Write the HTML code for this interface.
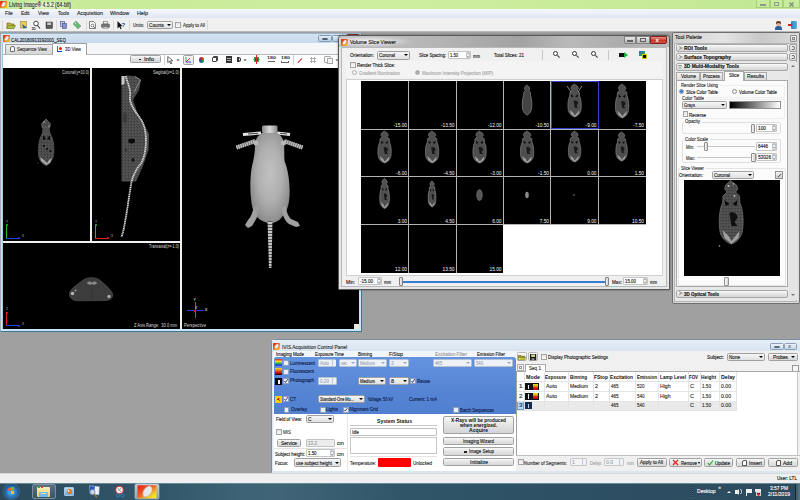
<!DOCTYPE html>
<html><head><meta charset="utf-8">
<style>
*{box-sizing:border-box;margin:0;padding:0}
html,body{width:800px;height:500px;overflow:hidden;background:#a0a0a0;font-family:"Liberation Sans",sans-serif;font-size:6px;color:#000;position:relative}
.a{position:absolute}
.t{position:absolute;white-space:nowrap;line-height:1;transform-origin:0 0}
svg{position:absolute}
</style></head><body>
<div class="a" style="left:0px;top:0px;width:800px;height:9px;background:linear-gradient(90deg,#c6ea98,#cdee9f 50%,#c2e894)"></div>
<div class="a" style="left:7px;top:1px;width:70px;height:8px;background:radial-gradient(ellipse at center,rgba(255,255,255,.9),rgba(255,255,255,0) 72%)"></div>
<svg style="left:0px;top:1px" width="7" height="7" viewBox="0 0 7 7"><defs><linearGradient id="lg01" x1="0" y1="0" x2="1" y2="1"><stop offset="0" stop-color="#e01818"/><stop offset="0.5" stop-color="#f07020"/><stop offset="1" stop-color="#f0e020"/></linearGradient></defs><rect width="7" height="7" rx="0.8" fill="url(#lg01)"/><ellipse cx="3.6" cy="3.4" rx="1.6" ry="2.6" transform="rotate(35 3.6 3.4)" fill="#f0f0f0" stroke="#a0a0a0" stroke-width="0.3"/></svg>
<div class="t" style="left:9px;top:2.38px;font-size:6.3px;color:#333;-webkit-text-stroke:0.15px currentColor;transform:scaleX(0.797);">Living Image® 4.5.2 (64-bit)</div>
<div class="a" style="left:756px;top:0px;width:14px;height:8px;border:1px solid #a8d080;border-top:0;background:#c8ec9c"></div>
<div class="a" style="left:770px;top:0px;width:13px;height:8px;border:1px solid #a8d080;border-top:0;background:#c8ec9c"></div>
<div class="a" style="left:783px;top:0px;width:17px;height:8px;border:1px solid #a8d080;border-top:0;background:#c8ec9c"></div>
<div class="a" style="left:760px;top:4px;width:6px;height:2px;background:#8a9a8a"></div>
<div class="a" style="left:774px;top:2px;width:5px;height:4px;border:1px solid #8a9a8a"></div>
<svg style="left:787px;top:1px" width="9" height="7" viewBox="0 0 9 7"><path d="M2.5 1.5 L6.5 5.5 M6.5 1.5 L2.5 5.5" stroke="#7a8a7a" stroke-width="1.3"/></svg>
<div class="a" style="left:0px;top:9px;width:800px;height:9px;background:linear-gradient(#f6f8fd,#dfe6f3)"></div>
<div class="t" style="left:4.5px;top:10.95px;font-size:5.8px;color:#2a2a2a;-webkit-text-stroke:0.15px currentColor;transform:scaleX(0.803);">File</div>
<div class="t" style="left:21px;top:10.95px;font-size:5.8px;color:#2a2a2a;-webkit-text-stroke:0.15px currentColor;transform:scaleX(0.850);">Edit</div>
<div class="t" style="left:38px;top:10.95px;font-size:5.8px;color:#2a2a2a;-webkit-text-stroke:0.15px currentColor;transform:scaleX(0.882);">View</div>
<div class="t" style="left:58px;top:10.95px;font-size:5.8px;color:#2a2a2a;-webkit-text-stroke:0.15px currentColor;transform:scaleX(0.812);">Tools</div>
<div class="t" style="left:77px;top:10.95px;font-size:5.8px;color:#2a2a2a;-webkit-text-stroke:0.15px currentColor;transform:scaleX(0.927);">Acquisition</div>
<div class="t" style="left:110px;top:10.95px;font-size:5.8px;color:#2a2a2a;-webkit-text-stroke:0.15px currentColor;transform:scaleX(0.921);">Window</div>
<div class="t" style="left:137px;top:10.95px;font-size:5.8px;color:#2a2a2a;-webkit-text-stroke:0.15px currentColor;transform:scaleX(0.922);">Help</div>
<div class="a" style="left:0px;top:18px;width:800px;height:14px;background:#f0f0f0;border-bottom:1px solid #b8b8b8"></div>
<div class="a" style="left:2px;top:20px;width:1px;height:10px;background:#d8d8d8"></div>
<svg style="left:0;top:18px" width="130" height="14" viewBox="0 18 130 14">
<path d="M7 23 L10 23 L11 24 L14 24 L14 28 L7 28 Z" fill="#c8b040" stroke="#6a5a10" stroke-width="0.6"/>
<path d="M8 25.5 L15.5 25.5 L14 28.5 L6.5 28.5 Z" fill="#a8c040" stroke="#5a6a10" stroke-width="0.5"/>
<rect x="20.5" y="21.5" width="6" height="6.5" fill="#e8d060" stroke="#8a7020" stroke-width="0.5"/>
<path d="M22 24 L27 27.5 L23.5 28.5 Z" fill="#2a5ab0"/>
<circle cx="36" cy="23.5" r="2.3" fill="#fff" stroke="#333" stroke-width="0.9"/>
<path d="M37.5 25.5 L40 28.5" stroke="#333" stroke-width="1.1"/>
<text x="31.5" y="29.5" font-size="3.2" font-weight="bold" fill="#222" font-family="Liberation Sans">3D</text>
<rect x="46" y="22" width="6.5" height="6.5" fill="#5a5a5a" stroke="#333" stroke-width="0.5"/>
<rect x="47.3" y="22.5" width="3.8" height="2.5" fill="#c8c8c8"/>
<rect x="60.5" y="21.5" width="4" height="5" fill="#c8c8e8" stroke="#404890" stroke-width="0.6"/>
<rect x="62.5" y="23.5" width="4" height="5" fill="#8890d0" stroke="#404890" stroke-width="0.6"/>
<path d="M73 24 L76 21 L81 26 L78 29 Z" fill="#60c070" stroke="#909090" stroke-width="0.6"/>
<circle cx="75.5" cy="23.5" r="0.6" fill="#fff"/>
<path d="M89.5 21.5 L93.5 21.5 L95.5 23.5 L95.5 28.5 L89.5 28.5 Z" fill="#fff" stroke="#333" stroke-width="0.6"/>
<circle cx="92.5" cy="25.5" r="1.4" fill="none" stroke="#333" stroke-width="0.6"/>
<path d="M93.5 26.5 L95 28" stroke="#333" stroke-width="0.7"/>
<rect x="103.5" y="21.5" width="4" height="2.5" fill="#f0f0f0" stroke="#555" stroke-width="0.5"/>
<rect x="101.5" y="24" width="8" height="3.5" rx="0.8" fill="#7a7a7a" stroke="#444" stroke-width="0.5"/>
<rect x="103" y="27" width="5" height="1.5" fill="#e8e8e8" stroke="#555" stroke-width="0.4"/>
<path d="M117.5 21 L117.5 28.5 L119.3 26.8 L120.6 29.3 L121.6 28.8 L120.4 26.3 L122.6 26.2 Z" fill="#111"/>
<text x="121.5" y="26.5" font-size="6" font-weight="bold" fill="#2040a0" font-family="Liberation Sans">?</text>
</svg>
<div class="a" style="left:2px;top:20px;width:1px;height:10px;background:#d8d8d8"></div>
<div class="a" style="left:56px;top:20px;width:1px;height:10px;background:#d8d8d8"></div>
<div class="a" style="left:86px;top:20px;width:1px;height:10px;background:#d8d8d8"></div>
<div class="a" style="left:113px;top:20px;width:1px;height:10px;background:#d8d8d8"></div>
<div class="a" style="left:129px;top:20px;width:1px;height:10px;background:#d8d8d8"></div>
<div class="t" style="left:133px;top:22.97px;font-size:5.6px;color:#333;-webkit-text-stroke:0.15px currentColor;transform:scaleX(0.768);">Units:</div>
<div class="a" style="left:147px;top:21px;width:26px;height:8px;background:linear-gradient(#f6f6f6,#e0e0e0);border:1px solid #a0a0a0;border-radius:1.5px"></div>
<div class="t" style="left:149px;top:22.97px;font-size:5.6px;color:#222;-webkit-text-stroke:0.15px currentColor;transform:scaleX(0.845);">Counts</div>
<div class="a" style="left:167px;top:24.0px;width:0px;height:0px;border-left:2px solid transparent;border-right:2px solid transparent;border-top:2px solid #000"></div>
<div class="a" style="left:175px;top:22px;width:6px;height:6px;background:linear-gradient(#e4e4e4,#fafafa);border:1px solid #a4a4a4"></div>
<div class="t" style="left:182.5px;top:22.97px;font-size:5.6px;color:#333;-webkit-text-stroke:0.15px currentColor;transform:scaleX(0.794);">Apply to All</div>
<div class="a" style="left:207px;top:20px;width:1px;height:10px;background:#d8d8d8"></div>
<div class="a" style="left:776px;top:21px;width:5px;height:3px;background:#553322;border-radius:50% 50% 0 0"></div>
<div class="a" style="left:776px;top:23px;width:5px;height:3px;background:#e0b090;border-radius:50%"></div>
<div class="a" style="left:775px;top:26px;width:7px;height:4px;background:#2a5aa0;border-radius:3px 3px 0 0"></div>
<div class="a" style="left:791px;top:21px;width:6px;height:8px;background:linear-gradient(90deg,#3080c0,#60b0e0);border-radius:1px"></div>
<div class="a" style="left:788px;top:24px;width:4px;height:2px;background:#e02020"></div>
<div class="a" style="left:0px;top:473px;width:800px;height:10px;background:#efefef;border-top:1px solid #d8d8d8"></div>
<div class="t" style="left:777px;top:475.97px;font-size:5.6px;color:#222;-webkit-text-stroke:0.15px currentColor;transform:scaleX(0.828);">User: LTL</div>
<div class="a" style="left:0px;top:483px;width:800px;height:17px;background:linear-gradient(90deg,#2a4a5c,#365c70 30%,#2e5266 60%,#2c4a5e)"></div>
<div class="a" style="left:0px;top:483px;width:800px;height:1px;background:#6a8a9a"></div>
<div class="a" style="left:0px;top:33px;width:362px;height:299px;background:#c8e4f8;border:1px solid #3c7a92;border-left-color:#a4acb4;border-top-color:#9ab4ca;border-radius:2px 2px 0 0"></div>
<div class="a" style="left:1px;top:34px;width:360px;height:9px;background:linear-gradient(#d6e4f2,#c6d8ec)"></div>
<svg style="left:3px;top:35px" width="7" height="7" viewBox="0 0 7 7"><defs><linearGradient id="lg335" x1="0" y1="0" x2="1" y2="1"><stop offset="0" stop-color="#e01818"/><stop offset="0.5" stop-color="#f07020"/><stop offset="1" stop-color="#f0e020"/></linearGradient></defs><rect width="7" height="7" rx="0.8" fill="url(#lg335)"/><ellipse cx="3.6" cy="3.4" rx="1.6" ry="2.6" transform="rotate(35 3.6 3.4)" fill="#f0f0f0" stroke="#a0a0a0" stroke-width="0.3"/></svg>
<div class="t" style="left:11px;top:37.55px;font-size:5.8px;color:#222;-webkit-text-stroke:0.15px currentColor;transform:scaleX(0.765);">CAL20180913192001_SEQ</div>
<div class="a" style="left:318px;top:35px;width:14px;height:7px;background:linear-gradient(#e4eef8,#b8cce0);border:1px solid #7e9ab6;border-radius:1.5px"></div>
<div class="a" style="left:322px;top:38px;width:6px;height:2px;border:1px solid #506070;border-radius:1px"></div>
<div class="a" style="left:332px;top:35px;width:14px;height:7px;background:linear-gradient(#e4eef8,#b8cce0);border:1px solid #7e9ab6;border-radius:1.5px"></div>
<div class="a" style="left:346px;top:34px;width:14px;height:8px;background:linear-gradient(#d88070,#b84030);border:1px solid #803028;border-radius:1.5px"></div>
<div class="a" style="left:2px;top:43px;width:357px;height:286px;background:#fff;border:1px solid #a8c8dc"></div>
<div class="a" style="left:3px;top:43px;width:355px;height:11px;background:#f4f6f8"></div>
<div class="a" style="left:3px;top:54px;width:355px;height:1px;background:#b8b8b8"></div>
<div class="a" style="left:5px;top:44px;width:48px;height:10px;background:linear-gradient(#eeeeee,#d6d6d6);border:1px solid #a0a0a0;border-bottom:0;border-radius:1px 1px 0 0"></div>
<div class="a" style="left:10px;top:46px;width:5px;height:6px;background:#fafafa;border:1px solid #707070;border-radius:2px 2px 0 0"></div>
<div class="t" style="left:17px;top:47.15px;font-size:5.8px;color:#333;-webkit-text-stroke:0.15px currentColor;transform:scaleX(0.746);">Sequence View</div>
<div class="a" style="left:52px;top:43px;width:35px;height:12px;background:#fff;border:1px solid #a0a0a0;border-bottom:0;border-radius:1px 1px 0 0"></div>
<div class="a" style="left:57px;top:46px;width:1px;height:5px;background:#20a020"></div>
<div class="a" style="left:57px;top:51px;width:5px;height:1px;background:#2040d0"></div>
<div class="a" style="left:59px;top:47px;width:3px;height:3px;background:#e02020;border-radius:50%"></div>
<div class="t" style="left:65px;top:47.15px;font-size:5.8px;color:#333;-webkit-text-stroke:0.15px currentColor;transform:scaleX(0.744);">3D View</div>
<div class="a" style="left:130px;top:55px;width:31px;height:8px;background:linear-gradient(#f8f8f8,#e4e4e4 50%,#d8d8d8);border:1px solid #a2a2a2;border-radius:1.5px"></div>
<div class="a" style="left:139px;top:58.5px;width:1.8px;height:1.8px;background:#222"></div>
<div class="t" style="left:144px;top:56.97px;font-size:5.6px;color:#222;-webkit-text-stroke:0.15px currentColor;transform:scaleX(1.071);">Info</div>
<div class="a" style="left:163.5px;top:55px;width:1px;height:10px;background:#d0d0d0"></div>
<svg style="left:166.5px;top:55.5px" width="6.6499999999999995" height="8.549999999999999" viewBox="0 0 7 9"><path d="M0.8 0.5 L0.8 7 L2.6 5.5 L3.9 8.3 L5 7.8 L3.8 5.1 L6 5 Z" fill="#fff" stroke="#333" stroke-width="0.8"/></svg>
<svg style="left:175.5px;top:58.5px" width="4.0" height="2.5" viewBox="0 0 4.0 2.5"><path d="M0.5 0.5 L3.5 0.5 L2.0 2.0 Z" fill="#222"/></svg>
<div class="a" style="left:183px;top:54.5px;width:11px;height:10px;background:linear-gradient(#f8f8f8,#e4e4e4);border:1px solid #a0a0a0;border-radius:1.5px"></div>
<svg style="left:184px;top:56px" width="9" height="8" viewBox="184 56 9 8"><path d="M186 57 L186 62" stroke="#20b020" stroke-width="0.9"/><path d="M186 62 L191 62" stroke="#2040e0" stroke-width="0.9"/><path d="M186 62 L190 58" stroke="#e02020" stroke-width="0.9"/></svg>
<div class="a" style="left:199px;top:57px;width:5px;height:6px;background:conic-gradient(#e02020,#20a020,#2040d0,#e02020);border-radius:50%"></div>
<div class="a" style="left:212px;top:57px;width:5px;height:5px;background:#fff;border:1px solid #444;border-radius:1px;box-shadow:1px -1px 0 #444"></div>
<div class="a" style="left:226px;top:56px;width:6px;height:7px;background:repeating-linear-gradient(#333 0 1px,#aaa 1px 2px);border:1px solid #333"></div>
<div class="a" style="left:237px;top:57px;width:4px;height:5px;border:1px solid #333;border-left:2px solid #333;border-radius:0 3px 3px 0"></div>
<svg style="left:242.5px;top:58.5px" width="4.0" height="2.5" viewBox="0 0 4.0 2.5"><path d="M0.5 0.5 L3.5 0.5 L2.0 2.0 Z" fill="#222"/></svg>
<div class="a" style="left:253px;top:56px;width:7px;height:7px;background:radial-gradient(circle,#206020 30%,#20a040 31%,#30b040 60%,transparent 62%)"></div>
<div class="a" style="left:256px;top:55px;width:1px;height:9px;background:#e02020"></div>
<div class="t" style="left:267px;top:56.18px;font-size:4px;color:#333;font-weight:bold;transform:scaleX(1.349);">180</div>
<div class="a" style="left:268px;top:61px;width:7px;height:1px;background:#666"></div>
<div class="t" style="left:281px;top:56.18px;font-size:4px;color:#333;font-weight:bold;transform:scaleX(1.349);">180</div>
<div class="a" style="left:281px;top:61px;width:8px;height:2px;border:1px solid #666;border-top:0"></div>
<div class="a" style="left:293px;top:55px;width:1px;height:10px;background:#d0d0d0"></div>
<div class="a" style="left:297px;top:60px;width:6px;height:1px;background:#d03030;transform:rotate(-45deg)"></div>
<div class="a" style="left:310px;top:57px;width:6px;height:6px;background:radial-gradient(circle,#888 1px,transparent 1.2px) 0 0/3px 3px;opacity:.7"></div>
<div class="a" style="left:324px;top:56px;width:7px;height:7px;border:1px solid #aaa;background:#f8f8f8;border-radius:1px"></div>
<div class="a" style="left:327px;top:58px;width:6px;height:6px;border:1px solid #aaa;background:#f4f4f4"></div>
<svg style="left:334.5px;top:58.5px" width="4.0" height="2.5" viewBox="0 0 4.0 2.5"><path d="M0.5 0.5 L3.5 0.5 L2.0 2.0 Z" fill="#444"/></svg>
<div class="a" style="left:3px;top:68px;width:356px;height:261px;background:#000"></div>
<div class="a" style="left:90px;top:68px;width:2px;height:173px;background:#f0f0f0"></div>
<div class="a" style="left:180px;top:68px;width:2px;height:261px;background:#f0f0f0"></div>
<div class="a" style="left:3px;top:241px;width:177px;height:2px;background:#f0f0f0"></div>
<div class="t" style="left:62px;top:70.62px;font-size:4.5px;color:#ddd;-webkit-text-stroke:0.15px currentColor;transform:scaleX(0.834);-webkit-text-stroke:0">Coronal(y=10.0)</div>
<div class="t" style="left:153px;top:70.62px;font-size:4.5px;color:#ddd;-webkit-text-stroke:0.15px currentColor;transform:scaleX(0.892);-webkit-text-stroke:0">Sagittal(x=1.0)</div>
<div class="t" style="left:149px;top:245.11px;font-size:4.5px;color:#ddd;-webkit-text-stroke:0.15px currentColor;transform:scaleX(0.828);-webkit-text-stroke:0">Transaxial(z=-1.0)</div>
<div class="t" style="left:134px;top:324.12px;font-size:4.5px;color:#ddd;-webkit-text-stroke:0.15px currentColor;transform:scaleX(0.896);-webkit-text-stroke:0">Z Axis Range:&nbsp; 30.0 mm</div>
<div class="t" style="left:184px;top:324.12px;font-size:4.5px;color:#ddd;-webkit-text-stroke:0.15px currentColor;transform:scaleX(0.936);-webkit-text-stroke:0">Perspective</div>
<div class="a" style="left:354px;top:324px;width:5px;height:5px;background:#ece8d4"></div>
<div class="a" style="left:6px;top:224.5px;width:1px;height:13px;background:#20c020"></div>
<div class="a" style="left:5.5px;top:224.0px;width:2px;height:2px;background:#20c020;border-radius:50%"></div>
<div class="a" style="left:6px;top:237.5px;width:13px;height:1px;background:#2040e0"></div>
<div class="a" style="left:18px;top:237.0px;width:2px;height:2px;background:#2040e0;border-radius:50%"></div>
<div class="t" style="left:6px;top:220.78px;font-size:3.2px;color:#bbb;-webkit-text-stroke:0.15px currentColor;-webkit-text-stroke:0">Y</div>
<div class="t" style="left:22px;top:235.28px;font-size:3.2px;color:#bbb;-webkit-text-stroke:0.15px currentColor;-webkit-text-stroke:0">X</div>
<div class="a" style="left:95px;top:224.5px;width:1px;height:13px;background:#20c020"></div>
<div class="a" style="left:94.5px;top:224.0px;width:2px;height:2px;background:#20c020;border-radius:50%"></div>
<div class="a" style="left:95px;top:237.5px;width:13px;height:1px;background:#e02020"></div>
<div class="a" style="left:107px;top:237.0px;width:2px;height:2px;background:#e02020;border-radius:50%"></div>
<div class="t" style="left:95px;top:220.78px;font-size:3.2px;color:#bbb;-webkit-text-stroke:0.15px currentColor;-webkit-text-stroke:0">Y</div>
<div class="t" style="left:111px;top:235.28px;font-size:3.2px;color:#bbb;-webkit-text-stroke:0.15px currentColor;-webkit-text-stroke:0">X</div>
<div class="a" style="left:6px;top:312px;width:1px;height:13px;background:#e02020"></div>
<div class="a" style="left:5.5px;top:311.5px;width:2px;height:2px;background:#e02020;border-radius:50%"></div>
<div class="a" style="left:6px;top:325px;width:13px;height:1px;background:#2040e0"></div>
<div class="a" style="left:18px;top:324.5px;width:2px;height:2px;background:#2040e0;border-radius:50%"></div>
<div class="t" style="left:6px;top:308.28px;font-size:3.2px;color:#bbb;-webkit-text-stroke:0.15px currentColor;-webkit-text-stroke:0">Z</div>
<div class="t" style="left:22px;top:322.78px;font-size:3.2px;color:#bbb;-webkit-text-stroke:0.15px currentColor;-webkit-text-stroke:0">X</div>
<div class="a" style="left:194.5px;top:302px;width:1px;height:16px;background:#20a020"></div>
<div class="a" style="left:187px;top:310px;width:17px;height:1px;background:#2040e0"></div>
<div class="a" style="left:194px;top:309.5px;width:2px;height:2px;background:#e02020"></div>
<div class="t" style="left:193.5px;top:298.75px;font-size:3.5px;color:#ccc;-webkit-text-stroke:0.15px currentColor;">Y</div>
<div class="t" style="left:205px;top:308.75px;font-size:3.5px;color:#ccc;-webkit-text-stroke:0.15px currentColor;">X</div>
<div class="t" style="left:195.5px;top:307.31px;font-size:3px;color:#ccc;-webkit-text-stroke:0.15px currentColor;">Z</div>
<svg style="left:183px;top:67px" width="176" height="262" viewBox="183 67 176 262">
<defs>
<radialGradient id="bodyg" cx="0.5" cy="0.45" r="0.62"><stop offset="0" stop-color="#c8c8c8"/><stop offset="0.5" stop-color="#b4b4b4"/><stop offset="0.85" stop-color="#949494"/><stop offset="1" stop-color="#767676"/></radialGradient>
<linearGradient id="neckg" x1="0" x2="1"><stop offset="0" stop-color="#8a8a8a"/><stop offset="0.5" stop-color="#d8d8d8"/><stop offset="1" stop-color="#8a8a8a"/></linearGradient>
<pattern id="tailp" width="4" height="3" patternUnits="userSpaceOnUse"><rect width="4" height="3" fill="#c4c4c4"/><rect y="2" width="4" height="1" fill="#5a5a5a"/></pattern>
<pattern id="skin" width="4" height="4" patternUnits="userSpaceOnUse"><rect width="4" height="4" fill="none"/><path d="M0 1 Q2 0 4 1.5 M0 3 Q2 2.2 4 3.4" stroke="#6a6a6a" stroke-width="0.4" fill="none"/></pattern>
</defs>
<path d="M236.5 147.5 L255.5 141" stroke="#7a7a7a" stroke-width="4"/><path d="M236.5 147.5 L255.5 141" stroke="#cacaca" stroke-width="4" stroke-dasharray="1 1.2"/>
<path d="M302.5 147.5 L284 141" stroke="#7a7a7a" stroke-width="4"/><path d="M302.5 147.5 L284 141" stroke="#cacaca" stroke-width="4" stroke-dasharray="1 1.2"/>
<path d="M243 134.5 L261 133" stroke="#e4e4e4" stroke-width="3"/>
<path d="M248 134 L258 133.3" stroke="#444" stroke-width="1"/>
<path d="M277 133 L290 134.5" stroke="#e4e4e4" stroke-width="3"/>
<path d="M280 133.3 L287 134" stroke="#444" stroke-width="1"/>
<rect x="262" y="125.5" width="15.5" height="7.5" rx="1.5" fill="url(#neckg)"/>
<path d="M262 133 C257 136 255 140 255 146 C255 152 254 157 253 162 C250 172 250 190 251 198 C251.5 206 253 212 257 217 C261 221 266 223 270 223 C275 223 279 221 282 217 C287 212 289 205 289.5 196 C290 186 289 172 284.5 161 C284 155 284.5 148 284 144 C283.5 139 281 135 277 133 Z" fill="url(#bodyg)"/>
<path d="M262 133 C257 136 255 140 255 146 C255 152 254 157 253 162 C250 172 250 190 251 198 C251.5 206 253 212 257 217 C261 221 266 223 270 223 C275 223 279 221 282 217 C287 212 289 205 289.5 196 C290 186 289 172 284.5 161 C284 155 284.5 148 284 144 C283.5 139 281 135 277 133 Z" fill="url(#skin)" opacity="0.35"/>
<circle cx="256" cy="143" r="2.5" fill="#b8b8b8"/><circle cx="283.5" cy="143" r="2.5" fill="#b8b8b8"/>
<path d="M254 205 C253 212 251 217 248 220 L245 225 L248 228 L252 226 L255 221 C258 216 259 211 258 207 Z" fill="#a0a0a0"/>
<path d="M286 205 C286 211 288 216 291 219 L298 222 L300 226 L296 227 L289 224 C284 220 282 214 282 208 Z" fill="#a0a0a0"/>
<path d="M267.5 221 L272.5 221 L271.5 268 L269 268 Z" fill="url(#tailp)"/>
<path d="M253 185 C252 200 255 212 262 219" stroke="#888" stroke-width="1" fill="none" opacity="0.6"/>
</svg>
<svg style="left:3px;top:67px" width="87" height="174" viewBox="3 67 87 174">
<defs><pattern id="spk2" width="3" height="3" patternUnits="userSpaceOnUse"><rect width="3" height="3" fill="#484848"/><rect x="0" y="0" width="1" height="1" fill="#5a5a5a"/><rect x="2" y="1" width="1" height="1" fill="#3a3a3a"/><rect x="1" y="2" width="1" height="1" fill="#525252"/></pattern></defs>
<path d="M46 119 L50.5 124 L49.5 128 L42.5 128 L41.5 124 Z" fill="url(#spk2)" stroke="#8a8a8a" stroke-width="0.6"/>
<path d="M42.5 128 L49.5 128 L50.5 134 L42 134 Z" fill="#4e4e4e"/>
<path d="M42 134 L50.5 134 C54 140 54.5 150 53.5 156 C52 161 49 165 46 165.5 C42 164 39 160 38.5 155 C38 147 39 139 42 134 Z" fill="url(#spk2)" stroke="#6a6a6a" stroke-width="0.5"/>
<path d="M43 135 L46 139 L43 140 Z M50 135 L47 139 L50 140 Z" fill="#080808"/>
<circle cx="44" cy="146" r="1" fill="#0a0a0a"/><circle cx="47" cy="149" r="1" fill="#0a0a0a"/><circle cx="50.5" cy="151" r="1.1" fill="#0a0a0a"/>
<path d="M40 157 L44 160 L47 163 L49 160 L52 158 L50 163 L46 165 L41 161 Z" fill="#a8a8a8"/>
<circle cx="44" cy="122" r="0.8" fill="#bbb"/><circle cx="49" cy="126" r="0.7" fill="#aaa"/>
<circle cx="38" cy="163" r="0.5" fill="#888"/>
</svg>
<svg style="left:92px;top:67px" width="88" height="174" viewBox="92 67 88 174">
<defs><pattern id="spk" width="3" height="3" patternUnits="userSpaceOnUse"><rect width="3" height="3" fill="#4a4a4a"/><rect x="0" y="0" width="1" height="1" fill="#5c5c5c"/><rect x="2" y="1" width="1" height="1" fill="#3c3c3c"/><rect x="1" y="2" width="1" height="1" fill="#545454"/></pattern></defs>
<path d="M121.5 77 L127 75.5 L135 76 L141 80 L139 90 L133 100 L137 112 L144 124 L149 134 L148.5 150 L143 166 L136 181.5 L121.5 181.5 Z" fill="url(#spk)"/>
<path d="M121.5 76 L124.5 76 L124.5 84 L121.5 85 Z" fill="#c8c8c8"/>
<path d="M135 76.5 L140.5 80 L134 92" fill="none" stroke="#8a8a8a" stroke-width="1"/>
<ellipse cx="131.6" cy="141" rx="3.4" ry="2.4" fill="#0a0a0a"/>
<ellipse cx="133" cy="160" rx="1.5" ry="2" fill="#151515"/>
<ellipse cx="125" cy="118" rx="2" ry="5" fill="#3a3a3a"/>
<ellipse cx="126" cy="150" rx="1" ry="1" fill="#202020"/>
<path d="M125.6 76 C128 84 131 90 130 96 C129 103 134 110 140 118 C145 125 147 135 145.5 149 C144 158 142 163 138.8 166 C135 172 133 176 131.5 182 C129 196 127 212 125 222 C124 228 123 233 121.5 237" fill="none" stroke="#d8d8d8" stroke-width="1.8" stroke-dasharray="1.3 0.5"/>
</svg>
<svg style="left:3px;top:243px" width="177" height="86" viewBox="3 243 177 86">
<path d="M84 279.5 C88 277 95 277 99 279.5 C104 283 109 288 112 292.5 C114 296 112 299.5 107 300.5 L77 300.8 C72 300.5 69 297 69.5 293 C71 288 78 284 84 279.5 Z" fill="#3c3c3c" stroke="#585858" stroke-width="0.6"/>
<path d="M87 283 C88 281 91 281 92 283 C93 281 96 281 97 283 C96 285 93 285 92 284 C91 285 88 285 87 283 Z" fill="#8a8a8a"/>
<circle cx="72.5" cy="293.5" r="1.8" fill="#b0b0b0"/><circle cx="75.5" cy="290.5" r="1.1" fill="#909090"/><circle cx="109" cy="296.5" r="1.7" fill="#a8a8a8"/>
<path d="M92 286 L92 299" stroke="#333" stroke-width="0.8"/>
</svg>
<div class="a" style="left:338px;top:35px;width:332px;height:255px;background:#e4e6e8;border:1px solid #5a5a5a;border-radius:4px 4px 1px 1px;box-shadow:0 0 2px rgba(0,0,0,.5)"></div>
<div class="a" style="left:339px;top:36px;width:330px;height:11px;background:linear-gradient(90deg,#c4c4c4 0%,#b4b4b4 30%,#a2a2a2 55%,#bababa 70%,#acacac 85%,#bcbcbc 100%);border-radius:3px 3px 0 0"></div>
<div class="a" style="left:339px;top:36px;width:75px;height:11px;background:radial-gradient(ellipse at 40% 50%,rgba(255,255,255,.85),rgba(255,255,255,0) 70%)"></div>
<svg style="left:341px;top:39px" width="7" height="7" viewBox="0 0 7 7"><defs><linearGradient id="lg34139" x1="0" y1="0" x2="1" y2="1"><stop offset="0" stop-color="#e01818"/><stop offset="0.5" stop-color="#f07020"/><stop offset="1" stop-color="#f0e020"/></linearGradient></defs><rect width="7" height="7" rx="0.8" fill="url(#lg34139)"/><ellipse cx="3.6" cy="3.4" rx="1.6" ry="2.6" transform="rotate(35 3.6 3.4)" fill="#f0f0f0" stroke="#a0a0a0" stroke-width="0.3"/></svg>
<div class="t" style="left:350px;top:39.57px;font-size:5.6px;color:#1a1a1a;-webkit-text-stroke:0.15px currentColor;transform:scaleX(0.903);">Volume Slice Viewer</div>
<div class="a" style="left:624px;top:36px;width:12px;height:8px;background:linear-gradient(#e8e8e8,#b8b8b8);border:1px solid #808080;border-radius:0 0 0 2px"></div>
<div class="a" style="left:627px;top:40px;width:6px;height:1.5px;background:#606060"></div>
<div class="a" style="left:636px;top:36px;width:14px;height:8px;background:linear-gradient(#e8e8e8,#b8b8b8);border:1px solid #808080"></div>
<div class="a" style="left:640px;top:38px;width:6px;height:4px;border:1px solid #606060"></div>
<div class="a" style="left:650px;top:36px;width:17px;height:8px;background:linear-gradient(#e89080,#c83828 60%,#d85040);border:1px solid #802020;border-radius:0 0 2px 0"></div>
<div class="t" style="left:655.5px;top:37.42px;font-size:6px;color:#fff;font-weight:bold;">x</div>
<div class="a" style="left:341px;top:47px;width:326px;height:240px;background:#f0f0f0;border:1px solid #b8b8b8"></div>
<div class="t" style="left:350px;top:53.07px;font-size:5.6px;color:#222;-webkit-text-stroke:0.15px currentColor;transform:scaleX(0.829);">Orientation:</div>
<div class="a" style="left:377px;top:50.5px;width:33px;height:9px;background:linear-gradient(#f6f6f6,#e0e0e0);border:1px solid #a0a0a0;border-radius:1.5px"></div>
<div class="t" style="left:379px;top:52.97px;font-size:5.6px;color:#222;-webkit-text-stroke:0.15px currentColor;transform:scaleX(0.816);">Coronal</div>
<div class="a" style="left:404px;top:54.0px;width:0px;height:0px;border-left:2px solid transparent;border-right:2px solid transparent;border-top:2px solid #000"></div>
<div class="t" style="left:419px;top:53.07px;font-size:5.6px;color:#222;-webkit-text-stroke:0.15px currentColor;transform:scaleX(0.761);">Slice Spacing:</div>
<div class="a" style="left:448px;top:51px;width:23px;height:8px;background:#fff;border:1px solid #c4c4c4;border-radius:1px"></div>
<div class="t" style="left:450px;top:52.97px;font-size:5.6px;color:#222;-webkit-text-stroke:0.15px currentColor;transform:scaleX(0.734);">1.50</div>
<div class="a" style="left:466px;top:52px;width:4px;height:6px;background:linear-gradient(#f8f8f8,#e4e4e4);border:0.5px solid #c4c4c4;border-radius:1px"></div>
<div class="a" style="left:467px;top:53.0px;width:0px;height:0px;border-left:1px solid transparent;border-right:1px solid transparent;border-bottom:1.2px solid #6080a0"></div>
<div class="a" style="left:467px;top:55.8px;width:0px;height:0px;border-left:1px solid transparent;border-right:1px solid transparent;border-top:1.2px solid #6080a0"></div>
<div class="t" style="left:473px;top:53.57px;font-size:5.6px;color:#222;-webkit-text-stroke:0.15px currentColor;transform:scaleX(0.750);">mm</div>
<div class="t" style="left:494px;top:53.17px;font-size:5.6px;color:#222;-webkit-text-stroke:0.15px currentColor;transform:scaleX(0.797);">Total Slices: 21</div>
<div class="a" style="left:542px;top:50px;width:1px;height:10px;background:#c8c8c8"></div>
<div class="a" style="left:553px;top:51px;width:5px;height:5px;border:1px solid #333;border-radius:50%;background:#fff"></div>
<div class="a" style="left:557px;top:56px;width:3px;height:1px;background:#333;transform:rotate(45deg)"></div>
<div class="a" style="left:572px;top:51px;width:5px;height:5px;border:1px solid #333;border-radius:50%;background:#fff"></div>
<div class="a" style="left:576px;top:56px;width:3px;height:1px;background:#333;transform:rotate(45deg)"></div>
<div class="a" style="left:591px;top:51px;width:5px;height:5px;border:1px solid #333;border-radius:50%;background:#fff"></div>
<div class="a" style="left:595px;top:56px;width:3px;height:1px;background:#333;transform:rotate(45deg)"></div>
<div class="a" style="left:608px;top:50px;width:1px;height:10px;background:#c8c8c8"></div>
<div class="a" style="left:619px;top:53px;width:5px;height:4px;background:#111"></div>
<div class="a" style="left:624px;top:52px;width:0px;height:0px;border-top:3px solid transparent;border-bottom:3px solid transparent;border-left:4px solid #20b040"></div>
<div class="a" style="left:639px;top:51px;width:6px;height:5px;background:linear-gradient(135deg,#3060c0,#40c040)"></div>
<div class="a" style="left:642px;top:54px;width:5px;height:5px;background:#111;border:1px solid #d0c020"></div>
<div class="a" style="left:346px;top:61px;width:316px;height:17px;background:#f4f4f4;border-radius:2px"></div>
<div class="a" style="left:350px;top:62px;width:5.5px;height:5.5px;background:linear-gradient(#e4e4e4,#fafafa);border:1px solid #a4a4a4"></div>
<div class="t" style="left:356.5px;top:63.17px;font-size:5.6px;color:#222;-webkit-text-stroke:0.15px currentColor;transform:scaleX(0.784);">Render Thick Slice:</div>
<div class="a" style="left:352px;top:70px;width:5px;height:5px;background:#f4f4f4;border:1px solid #b0b0b0;border-radius:50%"></div>
<div class="t" style="left:359px;top:70.97px;font-size:5.6px;color:#a8a8a8;-webkit-text-stroke:0.15px currentColor;transform:scaleX(0.798);">Gradient Illumination</div>
<div class="a" style="left:415px;top:70px;width:5px;height:5px;background:#f4f4f4;border:1px solid #b0b0b0;border-radius:50%"></div>
<div class="a" style="left:416.2px;top:71.2px;width:2.6px;height:2.6px;background:#2a7ad0;border-radius:50%"></div>
<div class="a" style="left:416.2px;top:71.2px;width:2.6px;height:2.6px;background:#b0b0b0;border-radius:50%"></div>
<div class="t" style="left:422px;top:70.97px;font-size:5.6px;color:#a8a8a8;-webkit-text-stroke:0.15px currentColor;transform:scaleX(0.803);">Maximum Intensity Projection (MIP)</div>
<div class="a" style="left:346px;top:78.5px;width:317px;height:197px;background:#fff;border:1px solid #d0d0d0"></div>
<div class="a" style="left:361px;top:81px;width:285px;height:192px;background:#000"></div>
<div class="a" style="left:408.0px;top:81px;width:1px;height:192px;background:#b4b4b4"></div>
<div class="a" style="left:455.5px;top:81px;width:1px;height:192px;background:#b4b4b4"></div>
<div class="a" style="left:502.5px;top:81px;width:1px;height:192px;background:#b4b4b4"></div>
<div class="a" style="left:550.0px;top:81px;width:1px;height:192px;background:#b4b4b4"></div>
<div class="a" style="left:597.5px;top:81px;width:1px;height:192px;background:#b4b4b4"></div>
<div class="a" style="left:361px;top:128.5px;width:285px;height:1px;background:#b4b4b4"></div>
<div class="a" style="left:361px;top:176.0px;width:285px;height:1px;background:#b4b4b4"></div>
<div class="a" style="left:361px;top:224.0px;width:285px;height:1px;background:#b4b4b4"></div>
<div class="a" style="left:503px;top:224.5px;width:143px;height:49px;background:#fff"></div>
<div class="a" style="left:503px;top:224px;width:143px;height:1px;background:#b4b4b4"></div>
<div class="a" style="left:550.5px;top:81px;width:48px;height:48px;border:1px solid #3040d0"></div>
<div class="t" style="left:393.39125px;top:124.08px;font-size:4.8px;color:#f4f4f4;-webkit-text-stroke:0.15px currentColor;-webkit-text-stroke:0">-15.00</div>
<div class="t" style="left:440.89125px;top:124.08px;font-size:4.8px;color:#f4f4f4;-webkit-text-stroke:0.15px currentColor;-webkit-text-stroke:0">-13.50</div>
<div class="t" style="left:487.89125px;top:124.08px;font-size:4.8px;color:#f4f4f4;-webkit-text-stroke:0.15px currentColor;-webkit-text-stroke:0">-12.00</div>
<div class="t" style="left:535.39125px;top:124.08px;font-size:4.8px;color:#f4f4f4;-webkit-text-stroke:0.15px currentColor;-webkit-text-stroke:0">-10.50</div>
<div class="t" style="left:585.5605px;top:124.08px;font-size:4.8px;color:#f4f4f4;-webkit-text-stroke:0.15px currentColor;-webkit-text-stroke:0">-9.00</div>
<div class="t" style="left:633.0605px;top:124.08px;font-size:4.8px;color:#f4f4f4;-webkit-text-stroke:0.15px currentColor;-webkit-text-stroke:0">-7.50</div>
<div class="t" style="left:396.0605px;top:171.58px;font-size:4.8px;color:#f4f4f4;-webkit-text-stroke:0.15px currentColor;-webkit-text-stroke:0">-6.00</div>
<div class="t" style="left:443.5605px;top:171.58px;font-size:4.8px;color:#f4f4f4;-webkit-text-stroke:0.15px currentColor;-webkit-text-stroke:0">-4.50</div>
<div class="t" style="left:490.5605px;top:171.58px;font-size:4.8px;color:#f4f4f4;-webkit-text-stroke:0.15px currentColor;-webkit-text-stroke:0">-3.00</div>
<div class="t" style="left:538.0605px;top:171.58px;font-size:4.8px;color:#f4f4f4;-webkit-text-stroke:0.15px currentColor;-webkit-text-stroke:0">-1.50</div>
<div class="t" style="left:587.15875px;top:171.58px;font-size:4.8px;color:#f4f4f4;-webkit-text-stroke:0.15px currentColor;-webkit-text-stroke:0">0.00</div>
<div class="t" style="left:634.65875px;top:171.58px;font-size:4.8px;color:#f4f4f4;-webkit-text-stroke:0.15px currentColor;-webkit-text-stroke:0">1.50</div>
<div class="t" style="left:397.65875px;top:219.58px;font-size:4.8px;color:#f4f4f4;-webkit-text-stroke:0.15px currentColor;-webkit-text-stroke:0">3.00</div>
<div class="t" style="left:445.15875px;top:219.58px;font-size:4.8px;color:#f4f4f4;-webkit-text-stroke:0.15px currentColor;-webkit-text-stroke:0">4.50</div>
<div class="t" style="left:492.15875px;top:219.58px;font-size:4.8px;color:#f4f4f4;-webkit-text-stroke:0.15px currentColor;-webkit-text-stroke:0">6.00</div>
<div class="t" style="left:539.65875px;top:219.58px;font-size:4.8px;color:#f4f4f4;-webkit-text-stroke:0.15px currentColor;-webkit-text-stroke:0">7.50</div>
<div class="t" style="left:587.15875px;top:219.58px;font-size:4.8px;color:#f4f4f4;-webkit-text-stroke:0.15px currentColor;-webkit-text-stroke:0">9.00</div>
<div class="t" style="left:631.9895px;top:219.58px;font-size:4.8px;color:#f4f4f4;-webkit-text-stroke:0.15px currentColor;-webkit-text-stroke:0">10.50</div>
<div class="t" style="left:394.9895px;top:268.08px;font-size:4.8px;color:#f4f4f4;-webkit-text-stroke:0.15px currentColor;-webkit-text-stroke:0">12.00</div>
<div class="t" style="left:442.4895px;top:268.08px;font-size:4.8px;color:#f4f4f4;-webkit-text-stroke:0.15px currentColor;-webkit-text-stroke:0">13.50</div>
<div class="t" style="left:489.4895px;top:268.08px;font-size:4.8px;color:#f4f4f4;-webkit-text-stroke:0.15px currentColor;-webkit-text-stroke:0">15.00</div>
<svg style="left:361px;top:81px" width="285" height="192" viewBox="361 81 285 192"><g transform="translate(527,85) scale(0.400,0.472) translate(-730.5,-180.5)"><path d="M730 180.5 L736 185 L737.5 189 L735 192 L739 196 L739.5 203 C743 210 743.5 225 741.5 233 C739.5 239 735 243 731 244 C726 243 721 238 719.5 232 C718 222 718.5 210 722 203 L722.5 196 L726.5 192 L724 189 L725 185 Z" fill="#444" stroke="#8a8a8a" stroke-width="1.50"/></g><g transform="translate(574.5,84) scale(0.560,0.520) translate(-730.5,-180.5)"><path d="M730 180.5 L736 185 L737.5 189 L735 192 L739 196 L739.5 203 C743 210 743.5 225 741.5 233 C739.5 239 735 243 731 244 C726 243 721 238 719.5 232 C718 222 718.5 210 722 203 L722.5 196 L726.5 192 L724 189 L725 185 Z" fill="#4e4e4e" stroke="#8a8a8a" stroke-width="1.07"/><path d="M724 200 L729 204 L725 206 Z M737 200 L732 204 L736 206 Z" fill="#080808"/><path d="M729 213 C732 211 737 213 737 218 L734 222 L737 226 L731 226 L730 220 Z" fill="#181818"/><path d="M722 230 L728 236 L731 241 L739 231 L738 238 L731 244 L724 238 Z" fill="#a0a0a0"/></g><path d="M567 86 L571 92 M582 86 L578 92" stroke="#aaa" stroke-width="0.8"/><g transform="translate(622,84) scale(0.560,0.535) translate(-730.5,-180.5)"><path d="M730 180.5 L736 185 L737.5 189 L735 192 L739 196 L739.5 203 C743 210 743.5 225 741.5 233 C739.5 239 735 243 731 244 C726 243 721 238 719.5 232 C718 222 718.5 210 722 203 L722.5 196 L726.5 192 L724 189 L725 185 Z" fill="#4e4e4e" stroke="#8a8a8a" stroke-width="1.07"/><path d="M724 200 L729 204 L725 206 Z M737 200 L732 204 L736 206 Z" fill="#080808"/><path d="M729 213 C732 211 737 213 737 218 L734 222 L737 226 L731 226 L730 220 Z" fill="#181818"/><path d="M722 230 L728 236 L731 241 L739 231 L738 238 L731 244 L724 238 Z" fill="#a0a0a0"/></g><g transform="translate(384.5,131) scale(0.560,0.504) translate(-730.5,-180.5)"><path d="M730 180.5 L736 185 L737.5 189 L735 192 L739 196 L739.5 203 C743 210 743.5 225 741.5 233 C739.5 239 735 243 731 244 C726 243 721 238 719.5 232 C718 222 718.5 210 722 203 L722.5 196 L726.5 192 L724 189 L725 185 Z" fill="#4e4e4e" stroke="#8a8a8a" stroke-width="1.07"/><path d="M724 200 L729 204 L725 206 Z M737 200 L732 204 L736 206 Z" fill="#080808"/><path d="M729 213 C732 211 737 213 737 218 L734 222 L737 226 L731 226 L730 220 Z" fill="#181818"/><path d="M722 230 L728 236 L731 241 L739 231 L738 238 L731 244 L724 238 Z" fill="#a0a0a0"/></g><g transform="translate(432,131) scale(0.560,0.504) translate(-730.5,-180.5)"><path d="M730 180.5 L736 185 L737.5 189 L735 192 L739 196 L739.5 203 C743 210 743.5 225 741.5 233 C739.5 239 735 243 731 244 C726 243 721 238 719.5 232 C718 222 718.5 210 722 203 L722.5 196 L726.5 192 L724 189 L725 185 Z" fill="#4e4e4e" stroke="#8a8a8a" stroke-width="1.07"/><path d="M724 200 L729 204 L725 206 Z M737 200 L732 204 L736 206 Z" fill="#080808"/><path d="M729 213 C732 211 737 213 737 218 L734 222 L737 226 L731 226 L730 220 Z" fill="#181818"/><path d="M722 230 L728 236 L731 241 L739 231 L738 238 L731 244 L724 238 Z" fill="#a0a0a0"/></g><g transform="translate(479.5,131) scale(0.560,0.504) translate(-730.5,-180.5)"><path d="M730 180.5 L736 185 L737.5 189 L735 192 L739 196 L739.5 203 C743 210 743.5 225 741.5 233 C739.5 239 735 243 731 244 C726 243 721 238 719.5 232 C718 222 718.5 210 722 203 L722.5 196 L726.5 192 L724 189 L725 185 Z" fill="#4e4e4e" stroke="#8a8a8a" stroke-width="1.07"/><path d="M724 200 L729 204 L725 206 Z M737 200 L732 204 L736 206 Z" fill="#080808"/><path d="M729 213 C732 211 737 213 737 218 L734 222 L737 226 L731 226 L730 220 Z" fill="#181818"/><path d="M722 230 L728 236 L731 241 L739 231 L738 238 L731 244 L724 238 Z" fill="#a0a0a0"/></g><g transform="translate(527,131) scale(0.560,0.504) translate(-730.5,-180.5)"><path d="M730 180.5 L736 185 L737.5 189 L735 192 L739 196 L739.5 203 C743 210 743.5 225 741.5 233 C739.5 239 735 243 731 244 C726 243 721 238 719.5 232 C718 222 718.5 210 722 203 L722.5 196 L726.5 192 L724 189 L725 185 Z" fill="#4e4e4e" stroke="#8a8a8a" stroke-width="1.07"/><path d="M724 200 L729 204 L725 206 Z M737 200 L732 204 L736 206 Z" fill="#080808"/><path d="M729 213 C732 211 737 213 737 218 L734 222 L737 226 L731 226 L730 220 Z" fill="#181818"/><path d="M722 230 L728 236 L731 241 L739 231 L738 238 L731 244 L724 238 Z" fill="#a0a0a0"/></g><g transform="translate(574.5,131) scale(0.520,0.488) translate(-730.5,-180.5)"><path d="M730 180.5 L736 185 L737.5 189 L735 192 L739 196 L739.5 203 C743 210 743.5 225 741.5 233 C739.5 239 735 243 731 244 C726 243 721 238 719.5 232 C718 222 718.5 210 722 203 L722.5 196 L726.5 192 L724 189 L725 185 Z" fill="#4e4e4e" stroke="#8a8a8a" stroke-width="1.15"/><path d="M724 200 L729 204 L725 206 Z M737 200 L732 204 L736 206 Z" fill="#080808"/><path d="M729 213 C732 211 737 213 737 218 L734 222 L737 226 L731 226 L730 220 Z" fill="#181818"/><path d="M722 230 L728 236 L731 241 L739 231 L738 238 L731 244 L724 238 Z" fill="#a0a0a0"/></g><g transform="translate(621.5,132) scale(0.480,0.457) translate(-730.5,-180.5)"><path d="M730 180.5 L736 185 L737.5 189 L735 192 L739 196 L739.5 203 C743 210 743.5 225 741.5 233 C739.5 239 735 243 731 244 C726 243 721 238 719.5 232 C718 222 718.5 210 722 203 L722.5 196 L726.5 192 L724 189 L725 185 Z" fill="#4e4e4e" stroke="#8a8a8a" stroke-width="1.25"/><path d="M724 200 L729 204 L725 206 Z M737 200 L732 204 L736 206 Z" fill="#080808"/><path d="M729 213 C732 211 737 213 737 218 L734 222 L737 226 L731 226 L730 220 Z" fill="#181818"/><path d="M722 230 L728 236 L731 241 L739 231 L738 238 L731 244 L724 238 Z" fill="#a0a0a0"/></g><g transform="translate(384.5,178.5) scale(0.400,0.472) translate(-730.5,-180.5)"><path d="M730 180.5 L736 185 L737.5 189 L735 192 L739 196 L739.5 203 C743 210 743.5 225 741.5 233 C739.5 239 735 243 731 244 C726 243 721 238 719.5 232 C718 222 718.5 210 722 203 L722.5 196 L726.5 192 L724 189 L725 185 Z" fill="#4e4e4e" stroke="#8a8a8a" stroke-width="1.50"/><path d="M724 200 L729 204 L725 206 Z M737 200 L732 204 L736 206 Z" fill="#080808"/><path d="M729 213 C732 211 737 213 737 218 L734 222 L737 226 L731 226 L730 220 Z" fill="#181818"/><path d="M722 230 L728 236 L731 241 L739 231 L738 238 L731 244 L724 238 Z" fill="#a0a0a0"/></g><g transform="translate(432,181) scale(0.320,0.409) translate(-730.5,-180.5)"><path d="M730 180.5 L736 185 L737.5 189 L735 192 L739 196 L739.5 203 C743 210 743.5 225 741.5 233 C739.5 239 735 243 731 244 C726 243 721 238 719.5 232 C718 222 718.5 210 722 203 L722.5 196 L726.5 192 L724 189 L725 185 Z" fill="#4e4e4e" stroke="#8a8a8a" stroke-width="1.88"/><path d="M724 200 L729 204 L725 206 Z M737 200 L732 204 L736 206 Z" fill="#080808"/><path d="M729 213 C732 211 737 213 737 218 L734 222 L737 226 L731 226 L730 220 Z" fill="#181818"/><path d="M722 230 L728 236 L731 241 L739 231 L738 238 L731 244 L724 238 Z" fill="#a0a0a0"/></g><ellipse cx="479.5" cy="195" rx="2.8" ry="5.5" fill="#555" stroke="#888" stroke-width="0.5"/><ellipse cx="527" cy="195" rx="1.8" ry="3.2" fill="#8a8a8a"/><circle cx="574" cy="195" r="0.8" fill="#888"/></svg>
<div class="t" style="left:346px;top:279.57px;font-size:5.6px;color:#222;-webkit-text-stroke:0.15px currentColor;transform:scaleX(0.851);">Min:</div>
<div class="a" style="left:358px;top:277px;width:24px;height:8px;background:#fff;border:1px solid #c4c4c4;border-radius:1px"></div>
<div class="t" style="left:360px;top:278.97px;font-size:5.6px;color:#222;-webkit-text-stroke:0.15px currentColor;transform:scaleX(0.819);">-15.00</div>
<div class="a" style="left:377px;top:278px;width:4px;height:6px;background:linear-gradient(#f8f8f8,#e4e4e4);border:0.5px solid #c4c4c4;border-radius:1px"></div>
<div class="a" style="left:378px;top:279.0px;width:0px;height:0px;border-left:1px solid transparent;border-right:1px solid transparent;border-bottom:1.2px solid #6080a0"></div>
<div class="a" style="left:378px;top:281.8px;width:0px;height:0px;border-left:1px solid transparent;border-right:1px solid transparent;border-top:1.2px solid #6080a0"></div>
<div class="t" style="left:384px;top:279.97px;font-size:5.6px;color:#222;-webkit-text-stroke:0.15px currentColor;transform:scaleX(0.750);">mm</div>
<div class="a" style="left:401px;top:280.5px;width:206px;height:2px;background:#3a7ed0"></div>
<div class="a" style="left:399px;top:277px;width:4px;height:9px;background:linear-gradient(90deg,#f4f4f4,#d0d0d0);border:1px solid #808080;border-radius:1px"></div>
<div class="a" style="left:605px;top:277px;width:4px;height:9px;background:linear-gradient(90deg,#f4f4f4,#d0d0d0);border:1px solid #808080;border-radius:1px"></div>
<div class="t" style="left:612px;top:279.57px;font-size:5.6px;color:#222;-webkit-text-stroke:0.15px currentColor;transform:scaleX(0.824);">Max:</div>
<div class="a" style="left:623px;top:277px;width:25px;height:8px;background:#fff;border:1px solid #c4c4c4;border-radius:1px"></div>
<div class="t" style="left:625px;top:278.97px;font-size:5.6px;color:#222;-webkit-text-stroke:0.15px currentColor;transform:scaleX(0.785);">15.00</div>
<div class="a" style="left:643px;top:278px;width:4px;height:6px;background:linear-gradient(#f8f8f8,#e4e4e4);border:0.5px solid #c4c4c4;border-radius:1px"></div>
<div class="a" style="left:644px;top:279.0px;width:0px;height:0px;border-left:1px solid transparent;border-right:1px solid transparent;border-bottom:1.2px solid #6080a0"></div>
<div class="a" style="left:644px;top:281.8px;width:0px;height:0px;border-left:1px solid transparent;border-right:1px solid transparent;border-top:1.2px solid #6080a0"></div>
<div class="t" style="left:650px;top:279.97px;font-size:5.6px;color:#222;-webkit-text-stroke:0.15px currentColor;transform:scaleX(0.750);">mm</div>
<div class="a" style="left:671.5px;top:31.5px;width:128px;height:272px;background:#dcdcdc;border:1px solid #6e6e6e;border-radius:2px"></div>
<div class="a" style="left:672.5px;top:32.5px;width:126px;height:10px;background:linear-gradient(90deg,#d0d0d0,#e4e4e4 40%,#c8c8c8 70%,#dadada)"></div>
<div class="t" style="left:675px;top:35.35px;font-size:5.8px;color:#222;-webkit-text-stroke:0.15px currentColor;transform:scaleX(0.891);">Tool Palette</div>
<div class="a" style="left:789.5px;top:35px;width:7px;height:7px;background:linear-gradient(#f0f0f0,#d4d4d4);border:1px solid #909090;border-radius:1px"></div>
<div class="a" style="left:791.5px;top:37px;width:3px;height:3px;border:1px solid #888"></div>
<div class="a" style="left:674px;top:42.5px;width:123px;height:259px;background:#e8e8e8;border:1px solid #b4b4b4"></div>
<div class="a" style="left:676px;top:44.2px;width:112px;height:8px;background:linear-gradient(#fafafa,#e6e6e6 50%,#d6d6d6);border:1px solid #a8a8a8;border-radius:2px"></div>
<div class="a" style="left:678.5px;top:45.7px;width:0px;height:0px;border-top:2.5px solid transparent;border-bottom:2.5px solid transparent;border-left:4px solid #888"></div>
<div class="a" style="left:679.3px;top:46.7px;width:0px;height:0px;border-top:1.5px solid transparent;border-bottom:1.5px solid transparent;border-left:2.5px solid #f0f0f0"></div>
<div class="t" style="left:684px;top:45.95px;font-size:5.8px;color:#1a1a1a;font-weight:bold;transform:scaleX(0.853);-webkit-text-stroke:0.2px #1a1a1a">ROI Tools</div>
<div class="a" style="left:789px;top:44.2px;width:8px;height:8px;background:linear-gradient(#f4f4f4,#d8d8d8);border:1px solid #a0a0a0;border-radius:2px"></div>
<div class="a" style="left:791px;top:46.2px;width:4px;height:4px;border:1px solid #666;border-radius:50%;border-left-color:transparent"></div>
<div class="a" style="left:676px;top:53.4px;width:112px;height:8px;background:linear-gradient(#fafafa,#e6e6e6 50%,#d6d6d6);border:1px solid #a8a8a8;border-radius:2px"></div>
<div class="a" style="left:678.5px;top:54.9px;width:0px;height:0px;border-top:2.5px solid transparent;border-bottom:2.5px solid transparent;border-left:4px solid #888"></div>
<div class="a" style="left:679.3px;top:55.9px;width:0px;height:0px;border-top:1.5px solid transparent;border-bottom:1.5px solid transparent;border-left:2.5px solid #f0f0f0"></div>
<div class="t" style="left:684px;top:55.15px;font-size:5.8px;color:#1a1a1a;font-weight:bold;transform:scaleX(0.840);-webkit-text-stroke:0.2px #1a1a1a">Surface Topography</div>
<div class="a" style="left:789px;top:53.4px;width:8px;height:8px;background:linear-gradient(#f4f4f4,#d8d8d8);border:1px solid #a0a0a0;border-radius:2px"></div>
<div class="a" style="left:791px;top:55.4px;width:4px;height:4px;border:1px solid #666;border-radius:50%;border-left-color:transparent"></div>
<div class="a" style="left:676px;top:62.6px;width:112px;height:8px;background:linear-gradient(#fafafa,#e6e6e6 50%,#d6d6d6);border:1px solid #a8a8a8;border-radius:2px"></div>
<div class="a" style="left:678px;top:65.1px;width:0px;height:0px;border-left:2.5px solid transparent;border-right:2.5px solid transparent;border-top:4px solid #888"></div>
<div class="a" style="left:679px;top:65.9px;width:0px;height:0px;border-left:1.5px solid transparent;border-right:1.5px solid transparent;border-top:2.5px solid #f0f0f0"></div>
<div class="t" style="left:684px;top:64.35px;font-size:5.8px;color:#1a1a1a;font-weight:bold;transform:scaleX(0.851);-webkit-text-stroke:0.2px #1a1a1a">3D Multi-Modality Tools</div>
<div class="a" style="left:788.5px;top:62px;width:9px;height:238px;background:#e4e4e4"></div>
<div class="a" style="left:791px;top:65px;width:0px;height:0px;border-left:2px solid transparent;border-right:2px solid transparent;border-bottom:2px solid #777"></div>
<div class="a" style="left:791px;top:294px;width:0px;height:0px;border-left:2px solid transparent;border-right:2px solid transparent;border-top:2px solid #777"></div>
<div class="a" style="left:676px;top:79.5px;width:112px;height:207px;background:#fbfbfb;border:1px solid #a8a8a8"></div>
<div class="a" style="left:676px;top:72px;width:24px;height:8px;background:linear-gradient(#f4f4f4,#dadada);border:1px solid #a8a8a8;border-bottom:0"></div>
<div class="t" style="left:680.5px;top:74.17px;font-size:5.6px;color:#222;-webkit-text-stroke:0.15px currentColor;transform:scaleX(0.803);">Volume</div>
<div class="a" style="left:700px;top:72px;width:23px;height:8px;background:linear-gradient(#f4f4f4,#dadada);border:1px solid #a8a8a8;border-bottom:0"></div>
<div class="t" style="left:703.0px;top:74.17px;font-size:5.6px;color:#222;-webkit-text-stroke:0.15px currentColor;transform:scaleX(0.840);">Process</div>
<div class="a" style="left:724px;top:71px;width:20px;height:9.5px;background:#fbfbfb;border:1px solid #a8a8a8;border-bottom:0"></div>
<div class="t" style="left:729px;top:73.27px;font-size:5.6px;color:#222;-webkit-text-stroke:0.15px currentColor;transform:scaleX(0.824);">Slice</div>
<div class="a" style="left:744px;top:72px;width:23px;height:8px;background:linear-gradient(#f4f4f4,#dadada);border:1px solid #a8a8a8;border-bottom:0"></div>
<div class="t" style="left:747px;top:74.17px;font-size:5.6px;color:#222;-webkit-text-stroke:0.15px currentColor;transform:scaleX(0.910);">Results</div>
<div class="a" style="left:677.5px;top:85px;width:107px;height:13px;border:1px solid #eeeeee;border-radius:2px"></div>
<div class="a" style="left:680px;top:81px;width:40px;height:5px;background:#fbfbfb"></div>
<div class="t" style="left:681px;top:82.67px;font-size:5.6px;color:#333;-webkit-text-stroke:0.15px currentColor;transform:scaleX(0.772);">Render Slice Using</div>
<div class="a" style="left:679px;top:89px;width:5.2px;height:5.2px;background:#f4f4f4;border:1px solid #8e8e8e;border-radius:50%"></div>
<div class="a" style="left:680.2px;top:90.2px;width:2.8000000000000003px;height:2.8000000000000003px;background:#2a7ad0;border-radius:50%"></div>
<div class="t" style="left:686px;top:89.67px;font-size:5.6px;color:#222;-webkit-text-stroke:0.15px currentColor;transform:scaleX(0.763);">Slice Color Table</div>
<div class="a" style="left:732px;top:89px;width:5.2px;height:5.2px;background:#f4f4f4;border:1px solid #8e8e8e;border-radius:50%"></div>
<div class="t" style="left:739px;top:89.67px;font-size:5.6px;color:#222;-webkit-text-stroke:0.15px currentColor;transform:scaleX(0.784);">Volume Color Table</div>
<div class="a" style="left:677.5px;top:98.5px;width:107px;height:20px;border:1px solid #eeeeee;border-radius:2px"></div>
<div class="a" style="left:680px;top:95px;width:26px;height:5px;background:#fbfbfb"></div>
<div class="t" style="left:682px;top:96.07px;font-size:5.6px;color:#333;-webkit-text-stroke:0.15px currentColor;transform:scaleX(0.780);">Color Table</div>
<div class="a" style="left:682px;top:101.3px;width:45px;height:8px;background:linear-gradient(#f6f6f6,#e0e0e0);border:1px solid #a0a0a0;border-radius:1.5px"></div>
<div class="t" style="left:684px;top:103.27px;font-size:5.6px;color:#222;-webkit-text-stroke:0.15px currentColor;transform:scaleX(0.737);">Grays</div>
<div class="a" style="left:721px;top:104.3px;width:0px;height:0px;border-left:2px solid transparent;border-right:2px solid transparent;border-top:2px solid #000"></div>
<div class="a" style="left:729px;top:101px;width:52px;height:8px;background:linear-gradient(90deg,#000,#fff);border:1px solid #909090"></div>
<div class="a" style="left:682.5px;top:111.4px;width:5.5px;height:5.5px;background:linear-gradient(#e4e4e4,#fafafa);border:1px solid #a4a4a4"></div>
<div class="t" style="left:689px;top:112.67px;font-size:5.6px;color:#222;-webkit-text-stroke:0.15px currentColor;transform:scaleX(0.815);">Reverse</div>
<div class="a" style="left:682px;top:121.7px;width:99px;height:12.6px;border:1px solid #e0e0e0;border-radius:2px"></div>
<div class="a" style="left:684px;top:118.5px;width:18px;height:5px;background:#fbfbfb"></div>
<div class="t" style="left:685px;top:119.37px;font-size:5.6px;color:#333;-webkit-text-stroke:0.15px currentColor;transform:scaleX(0.790);">Opacity</div>
<div class="a" style="left:686px;top:127.5px;width:65px;height:1px;background:#c8c8c8;border-bottom:1px solid #fff"></div>
<div class="a" style="left:751px;top:124px;width:4px;height:9px;background:linear-gradient(90deg,#f8f8f8,#d4d4d4);border:1px solid #909090;border-radius:1px"></div>
<div class="a" style="left:756.3px;top:124.4px;width:21px;height:8px;background:#fff;border:1px solid #c4c4c4;border-radius:1px"></div>
<div class="t" style="left:758.3px;top:126.37px;font-size:5.6px;color:#222;-webkit-text-stroke:0.15px currentColor;transform:scaleX(0.856);">100</div>
<div class="a" style="left:772.3px;top:125.4px;width:4px;height:6px;background:linear-gradient(#f8f8f8,#e4e4e4);border:0.5px solid #c4c4c4;border-radius:1px"></div>
<div class="a" style="left:773.3px;top:126.4px;width:0px;height:0px;border-left:1px solid transparent;border-right:1px solid transparent;border-bottom:1.2px solid #6080a0"></div>
<div class="a" style="left:773.3px;top:129.20000000000002px;width:0px;height:0px;border-left:1px solid transparent;border-right:1px solid transparent;border-top:1.2px solid #6080a0"></div>
<div class="a" style="left:682px;top:138.5px;width:99px;height:24.5px;border:1px solid #e0e0e0;border-radius:2px"></div>
<div class="a" style="left:684px;top:135.5px;width:26px;height:5px;background:#fbfbfb"></div>
<div class="t" style="left:685px;top:136.67px;font-size:5.6px;color:#333;-webkit-text-stroke:0.15px currentColor;transform:scaleX(0.795);">Color Scale</div>
<div class="t" style="left:686px;top:144.97px;font-size:5.6px;color:#333;-webkit-text-stroke:0.15px currentColor;transform:scaleX(0.756);">Min:</div>
<div class="a" style="left:697px;top:145.5px;width:58px;height:1px;background:#c8c8c8"></div>
<div class="a" style="left:703.7px;top:142px;width:4.5px;height:9px;background:linear-gradient(90deg,#f8f8f8,#d4d4d4);border:1px solid #909090;border-radius:1px"></div>
<div class="a" style="left:756.3px;top:142px;width:21px;height:8.5px;background:#fff;border:1px solid #c4c4c4;border-radius:1px"></div>
<div class="t" style="left:758.3px;top:144.22px;font-size:5.6px;color:#222;-webkit-text-stroke:0.15px currentColor;transform:scaleX(0.803);">6446</div>
<div class="a" style="left:772.3px;top:143px;width:4px;height:6.5px;background:linear-gradient(#f8f8f8,#e4e4e4);border:0.5px solid #c4c4c4;border-radius:1px"></div>
<div class="a" style="left:773.3px;top:144.25px;width:0px;height:0px;border-left:1px solid transparent;border-right:1px solid transparent;border-bottom:1.2px solid #6080a0"></div>
<div class="a" style="left:773.3px;top:147.05px;width:0px;height:0px;border-left:1px solid transparent;border-right:1px solid transparent;border-top:1.2px solid #6080a0"></div>
<div class="t" style="left:686px;top:155.97px;font-size:5.6px;color:#333;-webkit-text-stroke:0.15px currentColor;transform:scaleX(0.742);">Max:</div>
<div class="a" style="left:697px;top:156.5px;width:58px;height:1px;background:#c8c8c8"></div>
<div class="a" style="left:751px;top:152.5px;width:4.5px;height:9px;background:linear-gradient(90deg,#f8f8f8,#d4d4d4);border:1px solid #909090;border-radius:1px"></div>
<div class="a" style="left:756.3px;top:152.5px;width:21px;height:8.5px;background:#fff;border:1px solid #c4c4c4;border-radius:1px"></div>
<div class="t" style="left:758.3px;top:154.72px;font-size:5.6px;color:#222;-webkit-text-stroke:0.15px currentColor;transform:scaleX(0.835);">53026</div>
<div class="a" style="left:772.3px;top:153.5px;width:4px;height:6.5px;background:linear-gradient(#f8f8f8,#e4e4e4);border:0.5px solid #c4c4c4;border-radius:1px"></div>
<div class="a" style="left:773.3px;top:154.75px;width:0px;height:0px;border-left:1px solid transparent;border-right:1px solid transparent;border-bottom:1.2px solid #6080a0"></div>
<div class="a" style="left:773.3px;top:157.55px;width:0px;height:0px;border-left:1px solid transparent;border-right:1px solid transparent;border-top:1.2px solid #6080a0"></div>
<div class="a" style="left:677.5px;top:168px;width:108px;height:118px;border:1px solid #e4e4e4;border-radius:2px"></div>
<div class="a" style="left:680px;top:165px;width:26px;height:5px;background:#fbfbfb"></div>
<div class="t" style="left:681px;top:166.17px;font-size:5.6px;color:#333;-webkit-text-stroke:0.15px currentColor;transform:scaleX(0.749);">Slice Viewer</div>
<div class="t" style="left:679px;top:173.37px;font-size:5.6px;color:#222;-webkit-text-stroke:0.15px currentColor;transform:scaleX(0.829);">Orientation:</div>
<div class="a" style="left:712px;top:171px;width:42px;height:8px;background:linear-gradient(#f6f6f6,#e0e0e0);border:1px solid #a0a0a0;border-radius:1.5px"></div>
<div class="t" style="left:714px;top:172.97px;font-size:5.6px;color:#222;-webkit-text-stroke:0.15px currentColor;transform:scaleX(0.816);">Coronal</div>
<div class="a" style="left:748px;top:174.0px;width:0px;height:0px;border-left:2px solid transparent;border-right:2px solid transparent;border-top:2px solid #000"></div>
<div class="a" style="left:775.2px;top:171px;width:8px;height:8px;background:linear-gradient(#f4f4f4,#d0d0d0);border:1px solid #909090"></div>
<div class="a" style="left:777px;top:175px;width:5px;height:1px;background:#555;transform:rotate(-45deg)"></div>
<div class="a" style="left:683.5px;top:180px;width:96px;height:96px;background:#000"></div>
<svg style="left:683.5px;top:180px" width="96" height="96" viewBox="683.5 180 96 96">
<defs><pattern id="spk3" width="3" height="3" patternUnits="userSpaceOnUse"><rect width="3" height="3" fill="#4a4a4a"/><rect x="0" y="0" width="1" height="1" fill="#5e5e5e"/><rect x="2" y="1" width="1" height="1" fill="#3a3a3a"/><rect x="1" y="2" width="1" height="1" fill="#565656"/></pattern></defs>
<path d="M730 180.5 L736 185 L737.5 189 L735 192 L739 196 L739.5 203 C743 210 743.5 225 741.5 233 C739.5 239 735 243 731 244 C726 243 721 238 719.5 232 C718 222 718.5 210 722 203 L722.5 196 L726.5 192 L724 189 L725 185 Z" fill="url(#spk3)" stroke="#8a8a8a" stroke-width="0.5"/>
<path d="M724 200 L729 204 L725 206 Z M737 200 L732 204 L736 206 Z" fill="#080808"/>
<path d="M729 213 C732 211 737 213 737 218 L734 222 L737 226 L731 226 L730 220 Z" fill="#101010"/>
<path d="M722 230 L728 236 L731 241 L739 231 L738 238 L731 244 L724 238 Z" fill="#a0a0a0"/>
<circle cx="728" cy="186" r="0.9" fill="#ccc"/><circle cx="733" cy="184" r="0.8" fill="#bbb"/><circle cx="734" cy="196" r="0.9" fill="#bbb"/>
<circle cx="719" cy="246" r="0.8" fill="#aaa"/>
</svg>
<div class="a" style="left:678px;top:279px;width:105px;height:1px;background:#d0d0d0;border-bottom:1px solid #fff"></div>
<div class="a" style="left:724px;top:277px;width:4.5px;height:9px;background:linear-gradient(90deg,#f8f8f8,#d4d4d4);border:1px solid #909090;border-radius:1px"></div>
<div class="a" style="left:676px;top:289.9px;width:112px;height:8px;background:linear-gradient(#fafafa,#e6e6e6 50%,#d6d6d6);border:1px solid #a8a8a8;border-radius:2px"></div>
<div class="a" style="left:678.5px;top:291.4px;width:0px;height:0px;border-top:2.5px solid transparent;border-bottom:2.5px solid transparent;border-left:4px solid #888"></div>
<div class="a" style="left:679.3px;top:292.4px;width:0px;height:0px;border-top:1.5px solid transparent;border-bottom:1.5px solid transparent;border-left:2.5px solid #f0f0f0"></div>
<div class="t" style="left:684px;top:291.65px;font-size:5.8px;color:#1a1a1a;font-weight:bold;transform:scaleX(0.772);-webkit-text-stroke:0.2px #1a1a1a">3D Optical Tools</div>
<div class="a" style="left:270.5px;top:339px;width:531px;height:134px;background:#dfe8f2;border:1px solid #7c8ea4;border-radius:4px 0 0 0"></div>
<div class="a" style="left:271.5px;top:340px;width:529px;height:11px;background:linear-gradient(#e6eef6,#d8e4f0)"></div>
<svg style="left:273px;top:343px" width="7" height="7" viewBox="0 0 7 7"><defs><linearGradient id="lg273343" x1="0" y1="0" x2="1" y2="1"><stop offset="0" stop-color="#e01818"/><stop offset="0.5" stop-color="#f07020"/><stop offset="1" stop-color="#f0e020"/></linearGradient></defs><rect width="7" height="7" rx="0.8" fill="url(#lg273343)"/><ellipse cx="3.6" cy="3.4" rx="1.6" ry="2.6" transform="rotate(35 3.6 3.4)" fill="#f0f0f0" stroke="#a0a0a0" stroke-width="0.3"/></svg>
<div class="t" style="left:282px;top:344.95px;font-size:5.8px;color:#333;-webkit-text-stroke:0.15px currentColor;transform:scaleX(0.844);">IVIS Acquisition Control Panel</div>
<div class="a" style="left:770px;top:343px;width:13.5px;height:7px;background:linear-gradient(#eef4fa,#c4d4e6);border:1px solid #8aa0b8;border-radius:1.5px"></div>
<div class="a" style="left:774px;top:346px;width:6px;height:2px;border:1px solid #5a6a7a;border-radius:1px"></div>
<div class="a" style="left:784px;top:343px;width:13px;height:7px;background:linear-gradient(#eef4fa,#c4d4e6);border:1px solid #8aa0b8;border-radius:1.5px"></div>
<div class="t" style="left:788px;top:343.79px;font-size:5.5px;color:#6a7a8a;font-weight:bold;">x</div>
<div class="a" style="left:273px;top:351px;width:527px;height:120px;background:#f2f5f9"></div>
<div class="t" style="left:276px;top:352.47px;font-size:5.6px;color:#222;-webkit-text-stroke:0.15px currentColor;transform:scaleX(0.789);">Imaging Mode</div>
<div class="t" style="left:315px;top:352.47px;font-size:5.6px;color:#222;-webkit-text-stroke:0.15px currentColor;transform:scaleX(0.777);">Exposure Time</div>
<div class="t" style="left:358px;top:352.47px;font-size:5.6px;color:#222;-webkit-text-stroke:0.15px currentColor;transform:scaleX(0.749);">Binning</div>
<div class="t" style="left:389px;top:352.47px;font-size:5.6px;color:#222;-webkit-text-stroke:0.15px currentColor;transform:scaleX(0.849);">F/Stop</div>
<div class="t" style="left:435px;top:352.47px;font-size:5.6px;color:#9a9a9a;-webkit-text-stroke:0.15px currentColor;transform:scaleX(0.836);">Excitation Filter</div>
<div class="t" style="left:477px;top:352.47px;font-size:5.6px;color:#222;-webkit-text-stroke:0.15px currentColor;transform:scaleX(0.763);">Emission Filter</div>
<div class="a" style="left:274px;top:357px;width:241.5px;height:56.5px;background:linear-gradient(#6494e0,#5684d4 60%,#5280d0);border-radius:2px 3px 0 0"></div>
<div class="a" style="left:275px;top:359px;width:7px;height:7px;background:linear-gradient(#e02020,#f0e020 35%,#20c040 60%,#2040e0 90%)"></div>
<div class="a" style="left:283.2px;top:360px;width:6px;height:6px;background:#e8eef6;border:1px solid #90a0b8"></div>
<div class="t" style="left:290px;top:360.77px;font-size:5.6px;color:#10204a;-webkit-text-stroke:0.15px currentColor;transform:scaleX(0.787);">Luminescent</div>
<div class="a" style="left:318.3px;top:358.6px;width:18.2px;height:8px;background:#eef2f8;border:1px solid #b4c0d0;border-radius:1px"></div>
<div class="t" style="left:320.3px;top:360.57px;font-size:5.6px;color:#a0a8b4;-webkit-text-stroke:0.15px currentColor;transform:scaleX(0.781);">Auto</div>
<div class="a" style="left:331.5px;top:359.6px;width:4px;height:6px;background:#eef2f8;border-left:1px solid #c0c8d8"></div>
<div class="a" style="left:338.6px;top:358.6px;width:18.4px;height:8px;background:#eef2f8;border:1px solid #b4c0d0;border-radius:1.5px"></div>
<div class="t" style="left:340.6px;top:360.57px;font-size:5.6px;color:#a0a8b4;-webkit-text-stroke:0.15px currentColor;transform:scaleX(0.689);">sec</div>
<div class="a" style="left:351.0px;top:361.6px;width:0px;height:0px;border-left:2px solid transparent;border-right:2px solid transparent;border-top:2px solid #a0a8b8"></div>
<div class="a" style="left:358.4px;top:358.6px;width:28.4px;height:8px;background:#eef2f8;border:1px solid #b4c0d0;border-radius:1.5px"></div>
<div class="t" style="left:360.4px;top:360.57px;font-size:5.6px;color:#a0a8b4;-webkit-text-stroke:0.15px currentColor;transform:scaleX(0.753);">Medium</div>
<div class="a" style="left:380.79999999999995px;top:361.6px;width:0px;height:0px;border-left:2px solid transparent;border-right:2px solid transparent;border-top:2px solid #a0a8b8"></div>
<div class="a" style="left:389.3px;top:358.6px;width:20px;height:8px;background:#eef2f8;border:1px solid #b4c0d0;border-radius:1.5px"></div>
<div class="t" style="left:391.3px;top:360.57px;font-size:5.6px;color:#a0a8b4;-webkit-text-stroke:0.15px currentColor;transform:scaleX(0.963);">2</div>
<div class="a" style="left:403.3px;top:361.6px;width:0px;height:0px;border-left:2px solid transparent;border-right:2px solid transparent;border-top:2px solid #a0a8b8"></div>
<div class="a" style="left:433px;top:359px;width:39px;height:8px;background:#eef2f8;border:1px solid #b4c0d0;border-radius:1.5px"></div>
<div class="t" style="left:435px;top:360.97px;font-size:5.6px;color:#a0a8b4;-webkit-text-stroke:0.15px currentColor;transform:scaleX(0.749);">465</div>
<div class="a" style="left:466px;top:362.0px;width:0px;height:0px;border-left:2px solid transparent;border-right:2px solid transparent;border-top:2px solid #a0a8b8"></div>
<div class="a" style="left:474.2px;top:359px;width:38.8px;height:8px;background:#eef2f8;border:1px solid #b4c0d0;border-radius:1.5px"></div>
<div class="t" style="left:476.2px;top:360.97px;font-size:5.6px;color:#a0a8b4;-webkit-text-stroke:0.15px currentColor;transform:scaleX(0.749);">540</div>
<div class="a" style="left:507.0px;top:362.0px;width:0px;height:0px;border-left:2px solid transparent;border-right:2px solid transparent;border-top:2px solid #a0a8b8"></div>
<div class="a" style="left:275px;top:368px;width:7px;height:7px;background:linear-gradient(#f0e020,#e02010 60%,#300000)"></div>
<div class="a" style="left:283.2px;top:369px;width:6px;height:6px;background:#e8eef6;border:1px solid #90a0b8"></div>
<div class="t" style="left:290px;top:369.47px;font-size:5.6px;color:#10204a;-webkit-text-stroke:0.15px currentColor;transform:scaleX(0.820);">Fluorescent</div>
<div class="a" style="left:275px;top:378px;width:7px;height:7px;background:#000"></div>
<div class="a" style="left:277.5px;top:379.5px;width:2px;height:4px;background:#fff"></div>
<div class="a" style="left:283.2px;top:378px;width:6px;height:6px;background:#e8eef6;border:1px solid #90a0b8"></div>
<svg style="left:283.2px;top:378px" width="6" height="6" viewBox="0 0 6 6"><path d="M1.4 3.1 L2.5 4.4 L4.8 1.2" fill="none" stroke="#1a2a50" stroke-width="0.9"/></svg>
<div class="t" style="left:290px;top:378.47px;font-size:5.6px;color:#10204a;-webkit-text-stroke:0.15px currentColor;transform:scaleX(0.829);">Photograph</div>
<div class="a" style="left:318.3px;top:377px;width:19px;height:8px;background:#eef2f8;border:1px solid #b4c0d0;border-radius:1px"></div>
<div class="t" style="left:320.3px;top:378.97px;font-size:5.6px;color:#a0a8b4;-webkit-text-stroke:0.15px currentColor;transform:scaleX(0.826);">0.20</div>
<div class="a" style="left:332.3px;top:378px;width:4px;height:6px;background:#eef2f8;border-left:1px solid #c0c8d8"></div>
<div class="a" style="left:358px;top:377px;width:28px;height:8px;background:linear-gradient(#f6f6f6,#e0e0e0);border:1px solid #a0a0a0;border-radius:1.5px"></div>
<div class="t" style="left:360px;top:378.97px;font-size:5.6px;color:#222;-webkit-text-stroke:0.15px currentColor;transform:scaleX(0.753);">Medium</div>
<div class="a" style="left:380px;top:380.0px;width:0px;height:0px;border-left:2px solid transparent;border-right:2px solid transparent;border-top:2px solid #000"></div>
<div class="a" style="left:389px;top:377px;width:20px;height:8px;background:linear-gradient(#f6f6f6,#e0e0e0);border:1px solid #a0a0a0;border-radius:1.5px"></div>
<div class="t" style="left:391px;top:378.97px;font-size:5.6px;color:#222;-webkit-text-stroke:0.15px currentColor;transform:scaleX(0.963);">8</div>
<div class="a" style="left:403px;top:380.0px;width:0px;height:0px;border-left:2px solid transparent;border-right:2px solid transparent;border-top:2px solid #000"></div>
<div class="a" style="left:410.3px;top:377.5px;width:6px;height:6px;background:#e8eef6;border:1px solid #90a0b8"></div>
<svg style="left:410.3px;top:377.5px" width="6" height="6" viewBox="0 0 6 6"><path d="M1.4 3.1 L2.5 4.4 L4.8 1.2" fill="none" stroke="#1a2a50" stroke-width="0.9"/></svg>
<div class="t" style="left:417px;top:378.97px;font-size:5.6px;color:#10204a;-webkit-text-stroke:0.15px currentColor;transform:scaleX(0.803);">Reuse</div>
<div class="a" style="left:275px;top:396px;width:7px;height:7px;background:#f0d000"></div>
<div class="a" style="left:276.8px;top:397.8px;width:3.4px;height:3.4px;background:conic-gradient(#c00 0 60deg,transparent 60deg 120deg,#c00 120deg 180deg,transparent 180deg 240deg,#c00 240deg 300deg,transparent 300deg);border-radius:50%"></div>
<div class="a" style="left:283.2px;top:396px;width:6px;height:6px;background:#e8eef6;border:1px solid #90a0b8"></div>
<svg style="left:283.2px;top:396px" width="6" height="6" viewBox="0 0 6 6"><path d="M1.4 3.1 L2.5 4.4 L4.8 1.2" fill="none" stroke="#1a2a50" stroke-width="0.9"/></svg>
<div class="t" style="left:290px;top:396.97px;font-size:5.6px;color:#10204a;-webkit-text-stroke:0.15px currentColor;transform:scaleX(0.804);">CT</div>
<div class="a" style="left:318.3px;top:395px;width:46.7px;height:8px;background:linear-gradient(#f6f6f6,#e0e0e0);border:1px solid #a0a0a0;border-radius:1.5px"></div>
<div class="t" style="left:320.3px;top:396.97px;font-size:5.6px;color:#222;-webkit-text-stroke:0.15px currentColor;transform:scaleX(0.691);">Standard-One Mo...</div>
<div class="a" style="left:359.0px;top:398.0px;width:0px;height:0px;border-left:2px solid transparent;border-right:2px solid transparent;border-top:2px solid #000"></div>
<div class="t" style="left:368px;top:396.97px;font-size:5.6px;color:#10204a;-webkit-text-stroke:0.15px currentColor;transform:scaleX(0.692);">Voltage: 50 kV</div>
<div class="t" style="left:409px;top:396.97px;font-size:5.6px;color:#10204a;-webkit-text-stroke:0.15px currentColor;transform:scaleX(0.803);">Current: 1 mA</div>
<div class="a" style="left:283.7px;top:407px;width:5.5px;height:5.5px;background:#e8eef6;border:1px solid #90a0b8"></div>
<div class="t" style="left:291px;top:407.47px;font-size:5.6px;color:#10204a;-webkit-text-stroke:0.15px currentColor;transform:scaleX(0.829);">Overlay</div>
<div class="a" style="left:320px;top:407px;width:5.5px;height:5.5px;background:#e8eef6;border:1px solid #90a0b8"></div>
<div class="t" style="left:326px;top:407.47px;font-size:5.6px;color:#10204a;-webkit-text-stroke:0.15px currentColor;transform:scaleX(0.803);">Lights</div>
<div class="a" style="left:343px;top:407px;width:5.5px;height:5.5px;background:#e8eef6;border:1px solid #90a0b8"></div>
<svg style="left:343px;top:407px" width="5.5" height="5.5" viewBox="0 0 6 6"><path d="M1.4 3.1 L2.5 4.4 L4.8 1.2" fill="none" stroke="#1a2a50" stroke-width="0.9"/></svg>
<div class="t" style="left:349px;top:407.47px;font-size:5.6px;color:#10204a;-webkit-text-stroke:0.15px currentColor;transform:scaleX(0.783);">Alignment Grid</div>
<div class="a" style="left:453px;top:407px;width:5.5px;height:5.5px;background:#e8eef6;border:1px solid #90a0b8"></div>
<div class="t" style="left:460px;top:407.97px;font-size:5.6px;color:#10204a;-webkit-text-stroke:0.15px currentColor;transform:scaleX(0.775);">Batch Sequences</div>
<div class="a" style="left:274px;top:413.5px;width:241.5px;height:57.5px;background:#fff"></div>
<div class="a" style="left:347px;top:414px;width:1px;height:57px;background:#e8e8e8"></div>
<div class="t" style="left:276px;top:417.37px;font-size:5.6px;color:#222;-webkit-text-stroke:0.15px currentColor;transform:scaleX(0.776);">Field of View:</div>
<div class="a" style="left:305.6px;top:415.3px;width:28.7px;height:8px;background:linear-gradient(#f6f6f6,#e0e0e0);border:1px solid #a0a0a0;border-radius:1.5px"></div>
<div class="t" style="left:307.6px;top:417.27px;font-size:5.6px;color:#222;-webkit-text-stroke:0.15px currentColor;transform:scaleX(0.865);">C</div>
<div class="a" style="left:328.3px;top:418.3px;width:0px;height:0px;border-left:2px solid transparent;border-right:2px solid transparent;border-top:2px solid #000"></div>
<div class="a" style="left:276px;top:429px;width:5.5px;height:5.5px;background:linear-gradient(#e4e4e4,#fafafa);border:1px solid #a4a4a4"></div>
<div class="t" style="left:283px;top:430.47px;font-size:5.6px;color:#444;-webkit-text-stroke:0.15px currentColor;transform:scaleX(0.804);">MIS</div>
<div class="a" style="left:277px;top:439.4px;width:24px;height:7.7px;background:linear-gradient(#f8f8f8,#e4e4e4 50%,#d8d8d8);border:1px solid #a2a2a2;border-radius:1.5px"></div>
<div class="t" style="left:281.0px;top:441.22px;font-size:5.6px;color:#222;-webkit-text-stroke:0.15px currentColor;transform:scaleX(0.857);">Service</div>
<div class="a" style="left:306.3px;top:439.4px;width:29px;height:7.7px;background:#ececec;border:1px solid #c4c4c4;border-radius:1px"></div>
<div class="t" style="left:308px;top:441.47px;font-size:5.6px;color:#a0a0a0;-webkit-text-stroke:0.15px currentColor;transform:scaleX(0.826);">13.2</div>
<div class="t" style="left:336.5px;top:441.47px;font-size:5.6px;color:#333;-webkit-text-stroke:0.15px currentColor;transform:scaleX(0.938);">cm</div>
<div class="a" style="left:274px;top:448px;width:73px;height:1px;background:#e4e4e4"></div>
<div class="t" style="left:274.5px;top:451.57px;font-size:5.6px;color:#222;-webkit-text-stroke:0.15px currentColor;transform:scaleX(0.810);">Subject height:</div>
<div class="a" style="left:306px;top:449px;width:29px;height:8px;background:#fff;border:1px solid #c4c4c4;border-radius:1px"></div>
<div class="t" style="left:308px;top:450.97px;font-size:5.6px;color:#222;-webkit-text-stroke:0.15px currentColor;transform:scaleX(0.780);">1.50</div>
<div class="a" style="left:330px;top:450px;width:4px;height:6px;background:linear-gradient(#f8f8f8,#e4e4e4);border:0.5px solid #c4c4c4;border-radius:1px"></div>
<div class="a" style="left:331px;top:451.0px;width:0px;height:0px;border-left:1px solid transparent;border-right:1px solid transparent;border-bottom:1.2px solid #6080a0"></div>
<div class="a" style="left:331px;top:453.8px;width:0px;height:0px;border-left:1px solid transparent;border-right:1px solid transparent;border-top:1.2px solid #6080a0"></div>
<div class="t" style="left:336.5px;top:451.77px;font-size:5.6px;color:#333;-webkit-text-stroke:0.15px currentColor;transform:scaleX(0.938);">cm</div>
<div class="t" style="left:275px;top:460.97px;font-size:5.6px;color:#222;-webkit-text-stroke:0.15px currentColor;transform:scaleX(0.774);">Focus:</div>
<div class="a" style="left:293.6px;top:458.3px;width:47px;height:9px;background:linear-gradient(#f6f6f6,#e0e0e0);border:1px solid #a0a0a0;border-radius:1.5px"></div>
<div class="t" style="left:295.6px;top:460.77px;font-size:5.6px;color:#222;-webkit-text-stroke:0.15px currentColor;transform:scaleX(0.798);">use subject height</div>
<div class="a" style="left:334.6px;top:461.8px;width:0px;height:0px;border-left:2px solid transparent;border-right:2px solid transparent;border-top:2px solid #000"></div>
<div class="t" style="left:377px;top:418.55px;font-size:5.8px;color:#111;font-weight:bold;transform:scaleX(0.876);">System Status</div>
<div class="a" style="left:350px;top:424.6px;width:87px;height:1px;background:#c8c8c8"></div>
<div class="a" style="left:350px;top:428px;width:87px;height:8px;background:#fff;border:1px solid #c0c0c0;border-radius:1px"></div>
<div class="t" style="left:352px;top:429.97px;font-size:5.6px;color:#222;-webkit-text-stroke:0.15px currentColor;transform:scaleX(0.775);">Idle</div>
<div class="a" style="left:350px;top:437px;width:87px;height:17px;background:#fff;border:1px solid #c8c8c8"></div>
<div class="t" style="left:350px;top:461.27px;font-size:5.6px;color:#333;-webkit-text-stroke:0.15px currentColor;transform:scaleX(0.788);">Temperature:</div>
<div class="a" style="left:377.8px;top:457.7px;width:33.2px;height:9.7px;background:#f00;border-radius:1px"></div>
<div class="t" style="left:412.5px;top:461.27px;font-size:5.6px;color:#333;-webkit-text-stroke:0.15px currentColor;transform:scaleX(0.814);">Unlocked</div>
<div class="a" style="left:350px;top:455.5px;width:87px;height:1px;background:#e4e4e4"></div>
<div class="a" style="left:443.2px;top:415.6px;width:70.7px;height:18.7px;background:linear-gradient(#f8f8f8,#e4e4e4 50%,#d4d4d4);border:1px solid #a2a2a2;border-radius:2px"></div>
<div class="t" style="left:451px;top:417.99px;font-size:5.5px;color:#111;font-weight:bold;transform:scaleX(0.865);">X-Rays will be produced</div>
<div class="t" style="left:460px;top:423.29px;font-size:5.5px;color:#111;font-weight:bold;transform:scaleX(0.865);">when energized.</div>
<div class="t" style="left:469px;top:428.49px;font-size:5.5px;color:#111;font-weight:bold;transform:scaleX(0.928);">Acquire</div>
<div class="a" style="left:443.2px;top:436.6px;width:70.7px;height:8.3px;background:linear-gradient(#f8f8f8,#e4e4e4 50%,#d8d8d8);border:1px solid #a2a2a2;border-radius:1.5px"></div>
<div class="t" style="left:463.05px;top:438.72px;font-size:5.6px;color:#222;-webkit-text-stroke:0.15px currentColor;transform:scaleX(0.797);">Imaging Wizard</div>
<div class="a" style="left:443.2px;top:447.2px;width:70.7px;height:8.5px;background:linear-gradient(#f8f8f8,#e4e4e4 50%,#d8d8d8);border:1px solid #a2a2a2;border-radius:1.5px"></div>
<div class="a" style="left:463.5px;top:450.5px;width:3px;height:2px;background:#222"></div>
<div class="t" style="left:469px;top:449.47px;font-size:5.6px;color:#222;-webkit-text-stroke:0.15px currentColor;transform:scaleX(0.787);">Image Setup</div>
<div class="a" style="left:443.2px;top:457.7px;width:70.7px;height:8.6px;background:linear-gradient(#f8f8f8,#e4e4e4 50%,#d8d8d8);border:1px solid #a2a2a2;border-radius:1.5px"></div>
<div class="t" style="left:469.55px;top:459.97px;font-size:5.6px;color:#222;-webkit-text-stroke:0.15px currentColor;transform:scaleX(0.890);">Initialize</div>
<div class="a" style="left:516px;top:351px;width:284px;height:120px;background:#f0f0f0"></div>
<div class="a" style="left:516.6px;top:352.2px;width:10.3px;height:9.2px;background:linear-gradient(#fafafa,#e4e4e4);border:1px solid #b8b8b8;border-radius:1.5px"></div>
<div class="a" style="left:527.8px;top:352.2px;width:10.3px;height:9.2px;background:linear-gradient(#fafafa,#e4e4e4);border:1px solid #b8b8b8;border-radius:1.5px"></div>
<svg style="left:516px;top:352px" width="24" height="10" viewBox="516 352 24 10">
<path d="M518.5 355.5 L521 355.5 L521.7 356.2 L524.5 356.2 L524.5 359.5 L518.5 359.5 Z" fill="#b0a020" stroke="#404010" stroke-width="0.5"/>
<path d="M519 357.5 L525.8 357.5 L524.5 360 L517.8 360 Z" fill="#c8d040" stroke="#505010" stroke-width="0.4"/>
<circle cx="519.3" cy="358.6" r="0.8" fill="#f0f060"/>
<rect x="530" y="354" width="6.2" height="6.2" fill="#1a1a10"/>
<rect x="531.2" y="354.5" width="3.8" height="2.4" fill="#d8e0a0"/>
<rect x="531.5" y="358.2" width="3" height="1.8" fill="#888"/>
</svg>
<div class="a" style="left:541px;top:354px;width:6px;height:6px;background:linear-gradient(#e4e4e4,#fafafa);border:1px solid #a4a4a4"></div>
<div class="t" style="left:548px;top:355.47px;font-size:5.6px;color:#222;-webkit-text-stroke:0.15px currentColor;transform:scaleX(0.803);">Display Photographic Settings</div>
<div class="t" style="left:707.2px;top:355.47px;font-size:5.6px;color:#222;-webkit-text-stroke:0.15px currentColor;transform:scaleX(0.840);">Subject:</div>
<div class="a" style="left:726.5px;top:352.5px;width:38.3px;height:8.8px;background:linear-gradient(#f6f6f6,#e0e0e0);border:1px solid #a0a0a0;border-radius:1.5px"></div>
<div class="t" style="left:728.5px;top:354.87px;font-size:5.6px;color:#222;-webkit-text-stroke:0.15px currentColor;transform:scaleX(0.822);">None</div>
<div class="a" style="left:758.8px;top:355.9px;width:0px;height:0px;border-left:2px solid transparent;border-right:2px solid transparent;border-top:2px solid #000"></div>
<div class="a" style="left:768.2px;top:352.5px;width:30px;height:8.8px;background:linear-gradient(#f8f8f8,#e4e4e4 50%,#d8d8d8);border:1px solid #a2a2a2;border-radius:1.5px"></div>
<div class="t" style="left:773px;top:354.97px;font-size:5.6px;color:#222;-webkit-text-stroke:0.15px currentColor;transform:scaleX(0.845);">Probes</div>
<div class="a" style="left:791px;top:356px;width:0px;height:0px;border-left:2px solid transparent;border-right:2px solid transparent;border-top:2px solid #000"></div>
<div class="a" style="left:517px;top:364px;width:7px;height:7px;background:#f0f0f0;border:1px solid #b0b0b0"></div>
<div class="a" style="left:519px;top:366px;width:3px;height:3px;background:#fff;border:0.5px solid #999"></div>
<div class="a" style="left:792px;top:365px;width:7px;height:7px;background:#f4f4f4;border:1px solid #999"></div>
<div class="a" style="left:516px;top:371.4px;width:284px;height:1px;background:#a8a8a8"></div>
<div class="a" style="left:524.6px;top:363.8px;width:21px;height:8.5px;background:#fff;border:1px solid #a8a8a8;border-bottom:0;border-radius:1px 1px 0 0"></div>
<div class="t" style="left:529px;top:366.27px;font-size:5.6px;color:#333;-webkit-text-stroke:0.15px currentColor;transform:scaleX(0.820);">Seq 1</div>
<div class="a" style="left:516px;top:372px;width:282px;height:83px;background:#fff;border-left:1px solid #a0a0a0;border-right:1px solid #c8c8c8"></div>
<div class="a" style="left:517px;top:400.5px;width:220px;height:9.5px;background:#eaeaea"></div>
<div class="a" style="left:517px;top:400.5px;width:7px;height:9.5px;background:#b8d8f4;border:1px solid #70a0d0"></div>
<div class="a" style="left:524px;top:372px;width:1px;height:38px;background:#e4e4e4"></div>
<div class="a" style="left:543.8px;top:372px;width:1px;height:38px;background:#e4e4e4"></div>
<div class="a" style="left:568.2px;top:372px;width:1px;height:38px;background:#e4e4e4"></div>
<div class="a" style="left:592.5px;top:372px;width:1px;height:38px;background:#e4e4e4"></div>
<div class="a" style="left:608.5px;top:372px;width:1px;height:38px;background:#e4e4e4"></div>
<div class="a" style="left:635.3px;top:372px;width:1px;height:38px;background:#e4e4e4"></div>
<div class="a" style="left:658.4px;top:372px;width:1px;height:38px;background:#e4e4e4"></div>
<div class="a" style="left:687.5px;top:372px;width:1px;height:38px;background:#e4e4e4"></div>
<div class="a" style="left:699.7px;top:372px;width:1px;height:38px;background:#e4e4e4"></div>
<div class="a" style="left:719.4px;top:372px;width:1px;height:38px;background:#e4e4e4"></div>
<div class="a" style="left:736.3px;top:372px;width:1px;height:38px;background:#e4e4e4"></div>
<div class="a" style="left:517px;top:381px;width:220px;height:1px;background:#e4e4e4"></div>
<div class="a" style="left:517px;top:390.5px;width:220px;height:1px;background:#e4e4e4"></div>
<div class="a" style="left:517px;top:400.5px;width:220px;height:1px;background:#e4e4e4"></div>
<div class="a" style="left:517px;top:410px;width:220px;height:1px;background:#e4e4e4"></div>
<div class="t" style="left:525.5px;top:374.97px;font-size:5.6px;color:#111;font-weight:bold;transform:scaleX(0.958);">Mode</div>
<div class="t" style="left:545.3px;top:374.97px;font-size:5.6px;color:#111;font-weight:bold;transform:scaleX(0.823);">Exposure</div>
<div class="t" style="left:569.7px;top:374.97px;font-size:5.6px;color:#111;font-weight:bold;transform:scaleX(0.816);">Binning</div>
<div class="t" style="left:594.0px;top:374.97px;font-size:5.6px;color:#111;font-weight:bold;transform:scaleX(0.883);">FStop</div>
<div class="t" style="left:610.0px;top:374.97px;font-size:5.6px;color:#111;font-weight:bold;transform:scaleX(0.860);">Excitation</div>
<div class="t" style="left:636.8px;top:374.97px;font-size:5.6px;color:#111;font-weight:bold;transform:scaleX(0.803);">Emission</div>
<div class="t" style="left:659.9px;top:374.97px;font-size:5.6px;color:#111;font-weight:bold;transform:scaleX(0.844);">Lamp Level</div>
<div class="t" style="left:689.0px;top:374.97px;font-size:5.6px;color:#111;font-weight:bold;transform:scaleX(0.782);">FOV</div>
<div class="t" style="left:701.2px;top:374.97px;font-size:5.6px;color:#111;font-weight:bold;transform:scaleX(0.861);">Height</div>
<div class="t" style="left:720.9px;top:374.97px;font-size:5.6px;color:#111;font-weight:bold;transform:scaleX(0.937);">Delay</div>
<div class="t" style="left:519px;top:384.47px;font-size:5.6px;color:#333;-webkit-text-stroke:0.15px currentColor;transform:scaleX(1.124);">1</div>
<div class="a" style="left:525px;top:383.0px;width:7px;height:7px;background:#111"></div>
<div class="a" style="left:528px;top:384.5px;width:1.3px;height:4.5px;background:#f0f0f0"></div>
<div class="a" style="left:532px;top:383.0px;width:6.5px;height:7px;background:#111"></div>
<div class="a" style="left:532.5px;top:383.5px;width:5.5px;height:6px;background:linear-gradient(#f8e020 0%,#f0a010 35%,#e01010 65%,#d00000)"></div>
<div class="t" style="left:545.8px;top:384.47px;font-size:5.6px;color:#333;-webkit-text-stroke:0.15px currentColor;transform:scaleX(0.955);">Auto</div>
<div class="t" style="left:570.2px;top:384.47px;font-size:5.6px;color:#333;-webkit-text-stroke:0.15px currentColor;transform:scaleX(0.904);">Medium</div>
<div class="t" style="left:594.5px;top:384.47px;font-size:5.6px;color:#333;-webkit-text-stroke:0.15px currentColor;transform:scaleX(0.963);">2</div>
<div class="t" style="left:610.5px;top:384.47px;font-size:5.6px;color:#333;-webkit-text-stroke:0.15px currentColor;transform:scaleX(0.803);">465</div>
<div class="t" style="left:637.3px;top:384.47px;font-size:5.6px;color:#333;-webkit-text-stroke:0.15px currentColor;transform:scaleX(0.803);">520</div>
<div class="t" style="left:660.4px;top:384.47px;font-size:5.6px;color:#333;-webkit-text-stroke:0.15px currentColor;transform:scaleX(0.912);">High</div>
<div class="t" style="left:689.5px;top:384.47px;font-size:5.6px;color:#333;-webkit-text-stroke:0.15px currentColor;transform:scaleX(0.989);">C</div>
<div class="t" style="left:701.7px;top:384.47px;font-size:5.6px;color:#333;-webkit-text-stroke:0.15px currentColor;transform:scaleX(0.826);">1.50</div>
<div class="t" style="left:721.4px;top:384.47px;font-size:5.6px;color:#333;-webkit-text-stroke:0.15px currentColor;transform:scaleX(0.918);">0.00</div>
<div class="t" style="left:519px;top:393.97px;font-size:5.6px;color:#333;-webkit-text-stroke:0.15px currentColor;transform:scaleX(1.124);">2</div>
<div class="a" style="left:525px;top:392.5px;width:7px;height:7px;background:#111"></div>
<div class="a" style="left:528px;top:394px;width:1.3px;height:4.5px;background:#f0f0f0"></div>
<div class="a" style="left:532px;top:392.5px;width:6.5px;height:7px;background:#111"></div>
<div class="a" style="left:532.5px;top:393px;width:5.5px;height:6px;background:linear-gradient(#f8e020 0%,#f0a010 35%,#e01010 65%,#d00000)"></div>
<div class="t" style="left:545.8px;top:393.97px;font-size:5.6px;color:#333;-webkit-text-stroke:0.15px currentColor;transform:scaleX(0.955);">Auto</div>
<div class="t" style="left:570.2px;top:393.97px;font-size:5.6px;color:#333;-webkit-text-stroke:0.15px currentColor;transform:scaleX(0.904);">Medium</div>
<div class="t" style="left:594.5px;top:393.97px;font-size:5.6px;color:#333;-webkit-text-stroke:0.15px currentColor;transform:scaleX(0.963);">2</div>
<div class="t" style="left:610.5px;top:393.97px;font-size:5.6px;color:#333;-webkit-text-stroke:0.15px currentColor;transform:scaleX(0.803);">465</div>
<div class="t" style="left:637.3px;top:393.97px;font-size:5.6px;color:#333;-webkit-text-stroke:0.15px currentColor;transform:scaleX(0.803);">540</div>
<div class="t" style="left:660.4px;top:393.97px;font-size:5.6px;color:#333;-webkit-text-stroke:0.15px currentColor;transform:scaleX(0.912);">High</div>
<div class="t" style="left:689.5px;top:393.97px;font-size:5.6px;color:#333;-webkit-text-stroke:0.15px currentColor;transform:scaleX(0.989);">C</div>
<div class="t" style="left:701.7px;top:393.97px;font-size:5.6px;color:#333;-webkit-text-stroke:0.15px currentColor;transform:scaleX(0.826);">1.50</div>
<div class="t" style="left:721.4px;top:393.97px;font-size:5.6px;color:#333;-webkit-text-stroke:0.15px currentColor;transform:scaleX(0.918);">0.00</div>
<div class="t" style="left:519px;top:403.47px;font-size:5.6px;color:#333;-webkit-text-stroke:0.15px currentColor;transform:scaleX(1.124);">3</div>
<div class="a" style="left:525px;top:402.0px;width:7px;height:7px;background:#111"></div>
<div class="a" style="left:528px;top:403.5px;width:1.3px;height:4.5px;background:#f0f0f0"></div>
<div class="a" style="left:525px;top:402.0px;width:7px;height:7px;background:#1a2a4a"></div>
<div class="a" style="left:528px;top:403.5px;width:1.3px;height:4.5px;background:#c0d0e0"></div>
<div class="t" style="left:610.5px;top:403.47px;font-size:5.6px;color:#333;-webkit-text-stroke:0.15px currentColor;transform:scaleX(0.803);">465</div>
<div class="t" style="left:637.3px;top:403.47px;font-size:5.6px;color:#333;-webkit-text-stroke:0.15px currentColor;transform:scaleX(0.803);">540</div>
<div class="t" style="left:689.5px;top:403.47px;font-size:5.6px;color:#333;-webkit-text-stroke:0.15px currentColor;transform:scaleX(0.989);">C</div>
<div class="t" style="left:701.7px;top:403.47px;font-size:5.6px;color:#333;-webkit-text-stroke:0.15px currentColor;transform:scaleX(0.826);">1.50</div>
<div class="t" style="left:721.4px;top:403.47px;font-size:5.6px;color:#333;-webkit-text-stroke:0.15px currentColor;transform:scaleX(0.918);">0.00</div>
<div class="a" style="left:516px;top:455px;width:284px;height:1px;background:#c0c0c0"></div>
<div class="a" style="left:517.5px;top:459px;width:6px;height:6px;background:linear-gradient(#e4e4e4,#fafafa);border:1px solid #a4a4a4"></div>
<div class="t" style="left:524px;top:460.97px;font-size:5.6px;color:#333;-webkit-text-stroke:0.15px currentColor;transform:scaleX(0.789);">Number of Segments:</div>
<div class="a" style="left:570px;top:458px;width:17px;height:8px;background:#f4f4f4;border:1px solid #c8c8c8;border-radius:1px"></div>
<div class="t" style="left:572px;top:459.97px;font-size:5.6px;color:#a0a8b4;-webkit-text-stroke:0.15px currentColor;transform:scaleX(0.963);">1</div>
<div class="a" style="left:582px;top:459px;width:4px;height:6px;background:#eef2f8;border-left:1px solid #c0c8d8"></div>
<div class="t" style="left:590px;top:460.97px;font-size:5.6px;color:#a8a8a8;-webkit-text-stroke:0.15px currentColor;transform:scaleX(0.756);">Delay:</div>
<div class="a" style="left:603.8px;top:458px;width:20.6px;height:8px;background:#f4f4f4;border:1px solid #c8c8c8;border-radius:1px"></div>
<div class="t" style="left:605.8px;top:459.97px;font-size:5.6px;color:#a0a8b4;-webkit-text-stroke:0.15px currentColor;transform:scaleX(0.899);">0.0</div>
<div class="a" style="left:619.4px;top:459px;width:4px;height:6px;background:#eef2f8;border-left:1px solid #c0c8d8"></div>
<div class="t" style="left:627px;top:460.97px;font-size:5.6px;color:#a8a8a8;-webkit-text-stroke:0.15px currentColor;transform:scaleX(0.776);">min</div>
<div class="a" style="left:636.6px;top:457.8px;width:30.3px;height:8.8px;background:linear-gradient(#f8f8f8,#e4e4e4 50%,#d8d8d8);border:1px solid #a2a2a2;border-radius:1.5px"></div>
<div class="t" style="left:640.25px;top:460.17px;font-size:5.6px;color:#222;-webkit-text-stroke:0.15px currentColor;transform:scaleX(0.830);">Apply to All</div>
<div class="a" style="left:668.8px;top:457.8px;width:32.8px;height:8.8px;background:linear-gradient(#f8f8f8,#e4e4e4 50%,#d8d8d8);border:1px solid #a2a2a2;border-radius:1.5px"></div>
<svg style="left:672px;top:459px" width="7" height="7" viewBox="0 0 7 7"><path d="M1 1 L6 6 M6 1 L1 6" stroke="#e02020" stroke-width="1.2"/></svg>
<div class="t" style="left:681px;top:460.97px;font-size:5.6px;color:#222;-webkit-text-stroke:0.15px currentColor;transform:scaleX(0.767);">Remove</div>
<div class="a" style="left:697.5px;top:461.5px;width:0px;height:0px;border-left:1.8px solid transparent;border-right:1.8px solid transparent;border-top:2px solid #000"></div>
<div class="a" style="left:704.4px;top:457.8px;width:29.1px;height:8.8px;background:linear-gradient(#f8f8f8,#e4e4e4 50%,#d8d8d8);border:1px solid #a2a2a2;border-radius:1.5px"></div>
<div class="a" style="left:709px;top:459px;width:2.5px;height:6px;border-right:1.5px solid #20a020;border-bottom:1.5px solid #20a020;transform:rotate(40deg)"></div>
<div class="t" style="left:715px;top:460.97px;font-size:5.6px;color:#222;-webkit-text-stroke:0.15px currentColor;transform:scaleX(0.831);">Update</div>
<div class="a" style="left:736.3px;top:457.8px;width:29.1px;height:8.8px;background:linear-gradient(#f8f8f8,#e4e4e4 50%,#d8d8d8);border:1px solid #a2a2a2;border-radius:1.5px"></div>
<div class="a" style="left:742px;top:459.5px;width:5px;height:6px;background:#fff;border:1px solid #555;border-radius:2px 0 0 0"></div>
<div class="t" style="left:749px;top:460.97px;font-size:5.6px;color:#222;-webkit-text-stroke:0.15px currentColor;transform:scaleX(0.928);">Insert</div>
<div class="a" style="left:768.2px;top:457.8px;width:30px;height:8.8px;background:linear-gradient(#f8f8f8,#e4e4e4 50%,#d8d8d8);border:1px solid #a2a2a2;border-radius:1.5px"></div>
<div class="a" style="left:776px;top:459.5px;width:5px;height:6px;background:#fff;border:1px solid #555;border-radius:2px 0 0 0"></div>
<div class="t" style="left:783px;top:460.97px;font-size:5.6px;color:#222;-webkit-text-stroke:0.15px currentColor;transform:scaleX(0.903);">Add</div>
<div class="a" style="left:271.5px;top:470.5px;width:529px;height:2px;background:#dde6f0"></div>
<div class="a" style="left:0px;top:484px;width:800px;height:16px;background:linear-gradient(90deg,rgba(255,255,255,0) 20%,rgba(255,255,255,.06) 35%,rgba(255,255,255,0) 50%)"></div>
<div class="a" style="left:3.5px;top:484px;width:15px;height:15px;background:radial-gradient(circle at 50% 55%,#5ab0e8 0%,#2a78c0 45%,#143c70 80%,#0a2040 100%);border-radius:50%;box-shadow:0 0 1.5px #9cf"></div>
<div class="a" style="left:7.5px;top:487.5px;width:3px;height:3px;background:#f06020;border-radius:1px 0 0 0;transform:skewY(-8deg)"></div>
<div class="a" style="left:11px;top:487px;width:3px;height:3px;background:#70c030;border-radius:0 1px 0 0;transform:skewY(-8deg)"></div>
<div class="a" style="left:7.5px;top:491px;width:3px;height:3px;background:#30a0f0;transform:skewY(-8deg)"></div>
<div class="a" style="left:11px;top:490.5px;width:3px;height:3px;background:#f8c020;transform:skewY(-8deg)"></div>
<div class="a" style="left:31.5px;top:484px;width:24px;height:15px;background:linear-gradient(#5a7080,#3a5464);border:1px solid #7890a0;border-radius:2px"></div>
<div class="a" style="left:37px;top:486.5px;width:13px;height:10px;background:linear-gradient(#f8f0b8,#e8d070);border-radius:1px"></div>
<div class="a" style="left:38px;top:486px;width:2px;height:1.5px;background:#40a040"></div>
<div class="a" style="left:41px;top:486px;width:2px;height:1.5px;background:#e04040"></div>
<div class="a" style="left:39px;top:492px;width:9px;height:4.5px;background:#70b8f0;border-radius:1px"></div>
<div class="a" style="left:41px;top:493px;width:5px;height:1.2px;background:#f8e890"></div>
<div class="a" style="left:64px;top:487px;width:10px;height:9px;background:linear-gradient(#b0dcf8,#68b0e0);border-radius:1px;border:0.5px solid #a0c8e8"></div>
<div class="a" style="left:66.5px;top:489px;width:5px;height:5px;background:#f07010;border-radius:50%"></div>
<div class="a" style="left:68.3px;top:490.3px;width:0px;height:0px;border-top:1.3px solid transparent;border-bottom:1.3px solid transparent;border-left:2px solid #fff"></div>
<svg style="left:85px;top:483px" width="75" height="17" viewBox="85 483 75 17">
<path d="M89.5 485.5 L99.5 486.5 L99 495 L90 494 Z" fill="#f0f4f8" stroke="#6080a0" stroke-width="0.5"/>
<path d="M90 486 L95 486.5 L94 493 L90 493 Z" fill="#2a58c8"/>
<circle cx="92.5" cy="492" r="2.6" fill="#c8d8e8" stroke="#5a7a9a" stroke-width="0.7"/>
<path d="M94 494 L97 497.5" stroke="#a07040" stroke-width="1.3"/>
<circle cx="119.5" cy="490" r="3.8" fill="#f4f4f4" stroke="#d03030" stroke-width="1.1"/>
<path d="M118 488 L121 492 M121 488 L118.5 491" stroke="#888" stroke-width="0.8"/>
<circle cx="122.5" cy="495.5" r="1.6" fill="none" stroke="#2a8ad0" stroke-width="0.8"/>
<circle cx="118" cy="495.5" r="1.6" fill="none" stroke="#2a8ad0" stroke-width="0.8"/>
<rect x="135" y="484" width="24" height="15" rx="1.5" fill="url(#lig)" stroke="#c0ccd4" stroke-width="0.6"/>
<defs><linearGradient id="lig" x1="0" y1="0" x2="0" y2="1"><stop offset="0" stop-color="#c8d0d6"/><stop offset="1" stop-color="#8a9aa4"/></linearGradient>
<linearGradient id="lii" x1="0" y1="0" x2="1" y2="1"><stop offset="0" stop-color="#e81818"/><stop offset="0.45" stop-color="#f06020"/><stop offset="0.75" stop-color="#f0d020"/><stop offset="1" stop-color="#f8f020"/></linearGradient></defs>
<rect x="137.5" y="485.3" width="19" height="13" fill="url(#lii)"/>
<ellipse cx="147.5" cy="491.5" rx="3.8" ry="6" transform="rotate(35 147.5 491.5)" fill="#e8e8e8" stroke="#b0b0b0" stroke-width="0.5"/>
</svg>
<div class="a" style="left:692px;top:486px;width:1px;height:12px;background:repeating-linear-gradient(#1a2a34 0 1px,#4a6a7a 1px 2px)"></div>
<div class="t" style="left:696.5px;top:489.45px;font-size:5.8px;color:#f4f8fc;-webkit-text-stroke:0.15px currentColor;transform:scaleX(0.879);">Desktop</div>
<div class="t" style="left:718px;top:485.05px;font-size:5px;color:#f0f0f0;font-weight:bold;transform:scaleX(1.079);">»</div>
<div class="a" style="left:727px;top:490.5px;width:0px;height:0px;border-left:2px solid transparent;border-right:2px solid transparent;border-bottom:2.5px solid #f0f0f0"></div>
<div class="a" style="left:735px;top:490px;width:2.5px;height:3.5px;background:#f0f0f0"></div>
<div class="a" style="left:736px;top:488.5px;width:0px;height:0px;border-top:3.5px solid transparent;border-bottom:3.5px solid transparent;border-right:3.5px solid #f0f0f0"></div>
<div class="a" style="left:740px;top:489px;width:2px;height:5px;border:1px solid #d0d0d0;border-left:0;border-radius:0 3px 3px 0"></div>
<div class="a" style="left:746px;top:489px;width:1px;height:7px;background:#f0f0f0"></div>
<div class="a" style="left:747px;top:489px;width:5px;height:3.5px;background:#f0f0f0"></div>
<div class="a" style="left:755px;top:489px;width:6px;height:3px;background:#e8e8e8"></div>
<div class="a" style="left:756px;top:492px;width:5px;height:4px;background:#1a2a40;border:1px solid #d0d0d0"></div>
<div class="a" style="left:757px;top:493px;width:3px;height:3px;background:#e02020;transform:rotate(45deg) scale(.8)"></div>
<div class="t" style="left:770px;top:486.47px;font-size:5.6px;color:#f4f8fc;-webkit-text-stroke:0.15px currentColor;transform:scaleX(0.863);">3:57 PM</div>
<div class="t" style="left:768px;top:492.47px;font-size:5.6px;color:#f4f8fc;-webkit-text-stroke:0.15px currentColor;transform:scaleX(0.898);">2/11/2019</div>
<div class="a" style="left:795px;top:484px;width:5px;height:16px;background:linear-gradient(90deg,#3a5a6a,#5a7a8a);border-left:1px solid #1a2a34"></div>
</body></html>
